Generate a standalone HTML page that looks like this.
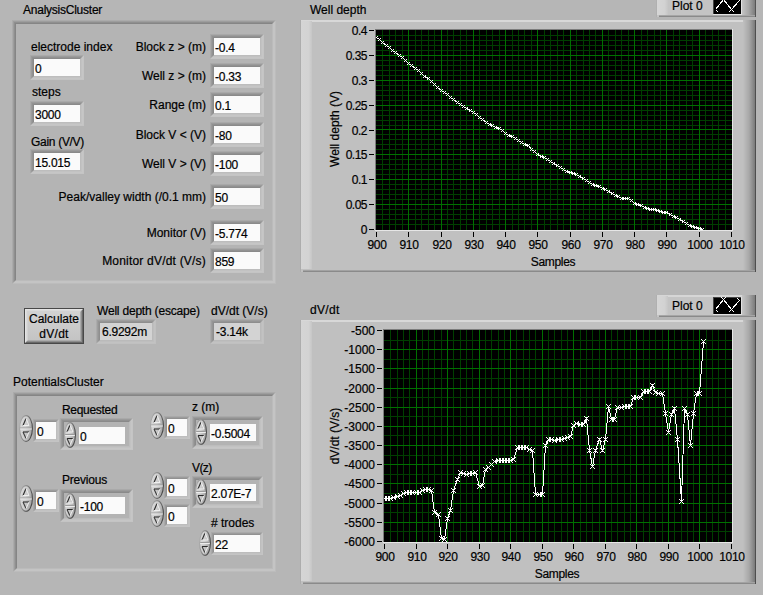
<!DOCTYPE html>
<html><head><meta charset="utf-8"><style>
html,body{margin:0;padding:0;}
body{width:763px;height:595px;overflow:hidden;background:#b6b6b6;position:relative;font-family:'Liberation Sans', sans-serif;}
.t{position:absolute;font-family:'Liberation Sans', sans-serif;font-size:12px;line-height:12px;color:#000;white-space:pre;-webkit-text-stroke:0.2px #000;}
</style></head><body>
<div class="t" style="left:23px;top:4px;font-size:12px;letter-spacing:-0.24px;">AnalysisCluster</div>
<div style="position:absolute;left:12px;top:20px;width:262px;height:262px;border-style:solid;border-width:1px;border-color:#ababab #bcbcbc #bcbcbc #ababab;"><div style="position:absolute;left:0px;top:0px;width:260px;height:260px;border-style:solid;border-width:1px;border-color:#9d9d9d #c4c4c4 #c4c4c4 #9d9d9d;"><div style="position:absolute;left:0px;top:0px;width:258px;height:258px;border-style:solid;border-width:1px;border-color:#8f8f8f #c4c4c4 #c4c4c4 #8f8f8f;"><div style="position:absolute;left:0px;top:0px;width:256px;height:256px;border-style:solid;border-width:1px;border-color:#858585 #bbbbbb #bbbbbb #858585;background:#b4b4b4;"></div></div></div></div>
<div class="t" style="left:31px;top:41px;font-size:12px;">electrode index</div>
<div style="position:absolute;left:30px;top:55px;width:52px;height:23px;border-style:solid;border-width:1px;border-color:#a9a9a9 #c4c4c4 #c4c4c4 #a9a9a9;"><div style="position:absolute;left:0px;top:0px;width:50px;height:21px;border-style:solid;border-width:1px;border-color:#9b9b9b #c6c6c6 #c6c6c6 #9b9b9b;"><div style="position:absolute;left:0px;top:0px;width:48px;height:19px;border-style:solid;border-width:1px;border-color:#919191 #c2c2c2 #c2c2c2 #919191;"><div style="position:absolute;left:0px;top:0px;width:46px;height:17px;border-style:solid;border-width:1px;border-color:#8a8a8a #bdbdbd #bdbdbd #8a8a8a;background:#fafafa;"></div></div></div></div>
<div class="t" style="left:35px;top:63px;font-size:12px;letter-spacing:-0.25px;">0</div>
<div class="t" style="left:32px;top:86px;font-size:12px;">steps</div>
<div style="position:absolute;left:30px;top:101px;width:52px;height:23px;border-style:solid;border-width:1px;border-color:#a9a9a9 #c4c4c4 #c4c4c4 #a9a9a9;"><div style="position:absolute;left:0px;top:0px;width:50px;height:21px;border-style:solid;border-width:1px;border-color:#9b9b9b #c6c6c6 #c6c6c6 #9b9b9b;"><div style="position:absolute;left:0px;top:0px;width:48px;height:19px;border-style:solid;border-width:1px;border-color:#919191 #c2c2c2 #c2c2c2 #919191;"><div style="position:absolute;left:0px;top:0px;width:46px;height:17px;border-style:solid;border-width:1px;border-color:#8a8a8a #bdbdbd #bdbdbd #8a8a8a;background:#fafafa;"></div></div></div></div>
<div class="t" style="left:35px;top:109px;font-size:12px;letter-spacing:-0.25px;">3000</div>
<div class="t" style="left:31px;top:136px;font-size:12px;letter-spacing:-0.3px;">Gain (V/V)</div>
<div style="position:absolute;left:30px;top:149px;width:52px;height:23px;border-style:solid;border-width:1px;border-color:#a9a9a9 #c4c4c4 #c4c4c4 #a9a9a9;"><div style="position:absolute;left:0px;top:0px;width:50px;height:21px;border-style:solid;border-width:1px;border-color:#9b9b9b #c6c6c6 #c6c6c6 #9b9b9b;"><div style="position:absolute;left:0px;top:0px;width:48px;height:19px;border-style:solid;border-width:1px;border-color:#919191 #c2c2c2 #c2c2c2 #919191;"><div style="position:absolute;left:0px;top:0px;width:46px;height:17px;border-style:solid;border-width:1px;border-color:#8a8a8a #bdbdbd #bdbdbd #8a8a8a;background:#fafafa;"></div></div></div></div>
<div class="t" style="left:35px;top:157px;font-size:12px;letter-spacing:-0.25px;">15.015</div>
<div class="t" style="left:-94px;width:300px;text-align:right;top:41px;font-size:12px;">Block z &gt; (m)</div>
<div style="position:absolute;left:210px;top:34px;width:52px;height:23px;border-style:solid;border-width:1px;border-color:#a9a9a9 #c4c4c4 #c4c4c4 #a9a9a9;"><div style="position:absolute;left:0px;top:0px;width:50px;height:21px;border-style:solid;border-width:1px;border-color:#9b9b9b #c6c6c6 #c6c6c6 #9b9b9b;"><div style="position:absolute;left:0px;top:0px;width:48px;height:19px;border-style:solid;border-width:1px;border-color:#919191 #c2c2c2 #c2c2c2 #919191;"><div style="position:absolute;left:0px;top:0px;width:46px;height:17px;border-style:solid;border-width:1px;border-color:#8a8a8a #bdbdbd #bdbdbd #8a8a8a;background:#fafafa;"></div></div></div></div>
<div class="t" style="left:215px;top:42px;font-size:12px;letter-spacing:-0.25px;">-0.4</div>
<div class="t" style="left:-94px;width:300px;text-align:right;top:70px;font-size:12px;">Well z &gt; (m)</div>
<div style="position:absolute;left:210px;top:63px;width:52px;height:23px;border-style:solid;border-width:1px;border-color:#a9a9a9 #c4c4c4 #c4c4c4 #a9a9a9;"><div style="position:absolute;left:0px;top:0px;width:50px;height:21px;border-style:solid;border-width:1px;border-color:#9b9b9b #c6c6c6 #c6c6c6 #9b9b9b;"><div style="position:absolute;left:0px;top:0px;width:48px;height:19px;border-style:solid;border-width:1px;border-color:#919191 #c2c2c2 #c2c2c2 #919191;"><div style="position:absolute;left:0px;top:0px;width:46px;height:17px;border-style:solid;border-width:1px;border-color:#8a8a8a #bdbdbd #bdbdbd #8a8a8a;background:#fafafa;"></div></div></div></div>
<div class="t" style="left:215px;top:71px;font-size:12px;letter-spacing:-0.25px;">-0.33</div>
<div class="t" style="left:-94px;width:300px;text-align:right;top:99px;font-size:12px;">Range (m)</div>
<div style="position:absolute;left:210px;top:92px;width:52px;height:23px;border-style:solid;border-width:1px;border-color:#a9a9a9 #c4c4c4 #c4c4c4 #a9a9a9;"><div style="position:absolute;left:0px;top:0px;width:50px;height:21px;border-style:solid;border-width:1px;border-color:#9b9b9b #c6c6c6 #c6c6c6 #9b9b9b;"><div style="position:absolute;left:0px;top:0px;width:48px;height:19px;border-style:solid;border-width:1px;border-color:#919191 #c2c2c2 #c2c2c2 #919191;"><div style="position:absolute;left:0px;top:0px;width:46px;height:17px;border-style:solid;border-width:1px;border-color:#8a8a8a #bdbdbd #bdbdbd #8a8a8a;background:#fafafa;"></div></div></div></div>
<div class="t" style="left:215px;top:100px;font-size:12px;letter-spacing:-0.25px;">0.1</div>
<div class="t" style="left:-94px;width:300px;text-align:right;top:129px;font-size:12px;">Block V &lt; (V)</div>
<div style="position:absolute;left:210px;top:122px;width:52px;height:23px;border-style:solid;border-width:1px;border-color:#a9a9a9 #c4c4c4 #c4c4c4 #a9a9a9;"><div style="position:absolute;left:0px;top:0px;width:50px;height:21px;border-style:solid;border-width:1px;border-color:#9b9b9b #c6c6c6 #c6c6c6 #9b9b9b;"><div style="position:absolute;left:0px;top:0px;width:48px;height:19px;border-style:solid;border-width:1px;border-color:#919191 #c2c2c2 #c2c2c2 #919191;"><div style="position:absolute;left:0px;top:0px;width:46px;height:17px;border-style:solid;border-width:1px;border-color:#8a8a8a #bdbdbd #bdbdbd #8a8a8a;background:#fafafa;"></div></div></div></div>
<div class="t" style="left:215px;top:130px;font-size:12px;letter-spacing:-0.25px;">-80</div>
<div class="t" style="left:-94px;width:300px;text-align:right;top:158px;font-size:12px;">Well V &gt; (V)</div>
<div style="position:absolute;left:210px;top:151px;width:52px;height:23px;border-style:solid;border-width:1px;border-color:#a9a9a9 #c4c4c4 #c4c4c4 #a9a9a9;"><div style="position:absolute;left:0px;top:0px;width:50px;height:21px;border-style:solid;border-width:1px;border-color:#9b9b9b #c6c6c6 #c6c6c6 #9b9b9b;"><div style="position:absolute;left:0px;top:0px;width:48px;height:19px;border-style:solid;border-width:1px;border-color:#919191 #c2c2c2 #c2c2c2 #919191;"><div style="position:absolute;left:0px;top:0px;width:46px;height:17px;border-style:solid;border-width:1px;border-color:#8a8a8a #bdbdbd #bdbdbd #8a8a8a;background:#fafafa;"></div></div></div></div>
<div class="t" style="left:215px;top:159px;font-size:12px;letter-spacing:-0.25px;">-100</div>
<div class="t" style="left:-94px;width:300px;text-align:right;top:191px;font-size:12px;">Peak/valley width (/0.1 mm)</div>
<div style="position:absolute;left:210px;top:184px;width:52px;height:23px;border-style:solid;border-width:1px;border-color:#a9a9a9 #c4c4c4 #c4c4c4 #a9a9a9;"><div style="position:absolute;left:0px;top:0px;width:50px;height:21px;border-style:solid;border-width:1px;border-color:#9b9b9b #c6c6c6 #c6c6c6 #9b9b9b;"><div style="position:absolute;left:0px;top:0px;width:48px;height:19px;border-style:solid;border-width:1px;border-color:#919191 #c2c2c2 #c2c2c2 #919191;"><div style="position:absolute;left:0px;top:0px;width:46px;height:17px;border-style:solid;border-width:1px;border-color:#8a8a8a #bdbdbd #bdbdbd #8a8a8a;background:#fafafa;"></div></div></div></div>
<div class="t" style="left:215px;top:192px;font-size:12px;letter-spacing:-0.25px;">50</div>
<div class="t" style="left:-94px;width:300px;text-align:right;top:227px;font-size:12px;">Monitor (V)</div>
<div style="position:absolute;left:210px;top:220px;width:52px;height:23px;border-style:solid;border-width:1px;border-color:#a9a9a9 #c4c4c4 #c4c4c4 #a9a9a9;"><div style="position:absolute;left:0px;top:0px;width:50px;height:21px;border-style:solid;border-width:1px;border-color:#9b9b9b #c6c6c6 #c6c6c6 #9b9b9b;"><div style="position:absolute;left:0px;top:0px;width:48px;height:19px;border-style:solid;border-width:1px;border-color:#919191 #c2c2c2 #c2c2c2 #919191;"><div style="position:absolute;left:0px;top:0px;width:46px;height:17px;border-style:solid;border-width:1px;border-color:#8a8a8a #bdbdbd #bdbdbd #8a8a8a;background:#fafafa;"></div></div></div></div>
<div class="t" style="left:215px;top:228px;font-size:12px;letter-spacing:-0.25px;">-5.774</div>
<div class="t" style="left:-94px;width:300px;text-align:right;top:255px;font-size:12px;letter-spacing:0.2px;">Monitor dV/dt (V/s)</div>
<div style="position:absolute;left:210px;top:248px;width:52px;height:23px;border-style:solid;border-width:1px;border-color:#a9a9a9 #c4c4c4 #c4c4c4 #a9a9a9;"><div style="position:absolute;left:0px;top:0px;width:50px;height:21px;border-style:solid;border-width:1px;border-color:#9b9b9b #c6c6c6 #c6c6c6 #9b9b9b;"><div style="position:absolute;left:0px;top:0px;width:48px;height:19px;border-style:solid;border-width:1px;border-color:#919191 #c2c2c2 #c2c2c2 #919191;"><div style="position:absolute;left:0px;top:0px;width:46px;height:17px;border-style:solid;border-width:1px;border-color:#8a8a8a #bdbdbd #bdbdbd #8a8a8a;background:#fafafa;"></div></div></div></div>
<div class="t" style="left:215px;top:256px;font-size:12px;letter-spacing:-0.25px;">859</div>
<div style="position:absolute;left:24px;top:308px;width:58px;height:34px;border:1px solid #484848;"></div>
<div style="position:absolute;left:25px;top:309px;width:56px;height:32px;border-style:solid;border-width:1px;border-color:#e4e4e4 #686868 #686868 #e4e4e4;"><div style="position:absolute;left:0px;top:0px;width:54px;height:30px;border-style:solid;border-width:1px;border-color:#dadada #8c8c8c #8c8c8c #dadada;"><div style="position:absolute;left:0px;top:0px;width:52px;height:28px;border-style:solid;border-width:1px;border-color:#d2d2d2 #ababab #ababab #d2d2d2;background:linear-gradient(#d2d2d2,#c4c4c4);"></div></div></div>
<div class="t" style="left:-96px;width:300px;text-align:center;top:313px;font-size:12px;">Calculate</div>
<div class="t" style="left:-96px;width:300px;text-align:center;top:328px;font-size:12px;letter-spacing:0.3px;">dV/dt</div>
<div class="t" style="left:97px;top:305px;font-size:12px;letter-spacing:-0.2px;">Well depth (escape)</div>
<div style="position:absolute;left:96px;top:319px;width:58px;height:23px;border-style:solid;border-width:1px;border-color:#ababab #c0c0c0 #c0c0c0 #ababab;"><div style="position:absolute;left:0px;top:0px;width:56px;height:21px;border-style:solid;border-width:1px;border-color:#9e9e9e #c2c2c2 #c2c2c2 #9e9e9e;"><div style="position:absolute;left:0px;top:0px;width:54px;height:19px;border-style:solid;border-width:1px;border-color:#959595 #bebebe #bebebe #959595;"><div style="position:absolute;left:0px;top:0px;width:52px;height:17px;border-style:solid;border-width:1px;border-color:#8e8e8e #bababa #bababa #8e8e8e;background:#d3d3d3;"></div></div></div></div>
<div class="t" style="left:102px;top:326px;font-size:12px;letter-spacing:-0.25px;">6.9292m</div>
<div class="t" style="left:211px;top:305px;font-size:12px;">dV/dt (V/s)</div>
<div style="position:absolute;left:210px;top:319px;width:52px;height:23px;border-style:solid;border-width:1px;border-color:#ababab #c0c0c0 #c0c0c0 #ababab;"><div style="position:absolute;left:0px;top:0px;width:50px;height:21px;border-style:solid;border-width:1px;border-color:#9e9e9e #c2c2c2 #c2c2c2 #9e9e9e;"><div style="position:absolute;left:0px;top:0px;width:48px;height:19px;border-style:solid;border-width:1px;border-color:#959595 #bebebe #bebebe #959595;"><div style="position:absolute;left:0px;top:0px;width:46px;height:17px;border-style:solid;border-width:1px;border-color:#8e8e8e #bababa #bababa #8e8e8e;background:#d3d3d3;"></div></div></div></div>
<div class="t" style="left:216px;top:326px;font-size:12px;letter-spacing:-0.25px;">-3.14k</div>
<div class="t" style="left:13px;top:376px;font-size:12px;">PotentialsCluster</div>
<div style="position:absolute;left:13px;top:392px;width:261px;height:178px;border-style:solid;border-width:1px;border-color:#ababab #bcbcbc #bcbcbc #ababab;"><div style="position:absolute;left:0px;top:0px;width:259px;height:176px;border-style:solid;border-width:1px;border-color:#9d9d9d #c4c4c4 #c4c4c4 #9d9d9d;"><div style="position:absolute;left:0px;top:0px;width:257px;height:174px;border-style:solid;border-width:1px;border-color:#8f8f8f #c4c4c4 #c4c4c4 #8f8f8f;"><div style="position:absolute;left:0px;top:0px;width:255px;height:172px;border-style:solid;border-width:1px;border-color:#858585 #bbbbbb #bbbbbb #858585;background:#b4b4b4;"></div></div></div></div>
<div class="t" style="left:62px;top:404px;font-size:12px;letter-spacing:-0.3px;">Requested</div>
<div style="position:absolute;left:33px;top:419px;width:24px;height:21px;border-style:solid;border-width:1px;border-color:#a9a9a9 #c4c4c4 #c4c4c4 #a9a9a9;"><div style="position:absolute;left:0px;top:0px;width:22px;height:19px;border-style:solid;border-width:1px;border-color:#9b9b9b #c2c2c2 #c2c2c2 #9b9b9b;"><div style="position:absolute;left:0px;top:0px;width:20px;height:17px;border-style:solid;border-width:1px;border-color:#919191 #bdbdbd #bdbdbd #919191;background:#fafafa;"></div></div></div>
<svg style="position:absolute;left:19px;top:415px" width="14" height="27" viewBox="0 0 14 27">
<defs><linearGradient id="sf1" x1="0" y1="0" x2="1" y2="0.3"><stop offset="0" stop-color="#dcdcdc"/><stop offset="0.55" stop-color="#cfcfcf"/><stop offset="1" stop-color="#a8a8a8"/></linearGradient>
<linearGradient id="ss1" x1="0" y1="0" x2="1" y2="0.4"><stop offset="0" stop-color="#b4b4b4"/><stop offset="0.5" stop-color="#8a8a8a"/><stop offset="1" stop-color="#4a4a4a"/></linearGradient></defs>
<ellipse cx="7.0" cy="13.5" rx="6.4" ry="12.9" fill="url(#sf1)" stroke="url(#ss1)" stroke-width="1.1"/>
<line x1="1.2" y1="13.0" x2="12.8" y2="13.0" stroke="#9a9a9a" stroke-width="1"/>
<line x1="1.2" y1="14.0" x2="12.8" y2="14.0" stroke="#ececec" stroke-width="1"/>
<path d="M4.0 10.5 L7.0 3.5" stroke="#2a2a2a" stroke-width="1.1" fill="none"/>
<path d="M7.0 3.5 L10.0 10.5 L4.0 10.5" stroke="#f4f4f4" stroke-width="0.9" fill="none"/>
<path d="M4.0 17.0 L10.0 17.0" stroke="#2a2a2a" stroke-width="1.1" fill="none"/>
<path d="M4.0 17.0 L7.0 23.5" stroke="#3a3a3a" stroke-width="1.1" fill="none"/>
<path d="M7.0 23.5 L10.0 17.0" stroke="#f4f4f4" stroke-width="0.9" fill="none"/>
</svg>
<div class="t" style="left:37px;top:426px;font-size:12px;letter-spacing:-0.25px;">0</div>
<div style="position:absolute;left:60px;top:418px;width:71px;height:30px;border-style:solid;border-width:1px;border-color:#a9a9a9 #c4c4c4 #c4c4c4 #a9a9a9;"><div style="position:absolute;left:0px;top:0px;width:69px;height:28px;border-style:solid;border-width:1px;border-color:#9b9b9b #c6c6c6 #c6c6c6 #9b9b9b;"><div style="position:absolute;left:0px;top:0px;width:67px;height:26px;border-style:solid;border-width:1px;border-color:#919191 #c2c2c2 #c2c2c2 #919191;"><div style="position:absolute;left:0px;top:0px;width:65px;height:24px;border-style:solid;border-width:1px;border-color:#8a8a8a #bdbdbd #bdbdbd #8a8a8a;background:#b3b3b3;"></div></div></div></div>
<div style="position:absolute;left:79px;top:427px;width:46px;height:17px;background:#fafafa"></div>
<svg style="position:absolute;left:64px;top:422px" width="12" height="26" viewBox="0 0 12 26">
<defs><linearGradient id="sf2" x1="0" y1="0" x2="1" y2="0.3"><stop offset="0" stop-color="#dcdcdc"/><stop offset="0.55" stop-color="#cfcfcf"/><stop offset="1" stop-color="#a8a8a8"/></linearGradient>
<linearGradient id="ss2" x1="0" y1="0" x2="1" y2="0.4"><stop offset="0" stop-color="#b4b4b4"/><stop offset="0.5" stop-color="#8a8a8a"/><stop offset="1" stop-color="#4a4a4a"/></linearGradient></defs>
<ellipse cx="6.0" cy="13.0" rx="5.4" ry="12.4" fill="url(#sf2)" stroke="url(#ss2)" stroke-width="1.1"/>
<line x1="1.2" y1="12.5" x2="10.8" y2="12.5" stroke="#9a9a9a" stroke-width="1"/>
<line x1="1.2" y1="13.5" x2="10.8" y2="13.5" stroke="#ececec" stroke-width="1"/>
<path d="M3.0 10.0 L6.0 3.0" stroke="#2a2a2a" stroke-width="1.1" fill="none"/>
<path d="M6.0 3.0 L9.0 10.0 L3.0 10.0" stroke="#f4f4f4" stroke-width="0.9" fill="none"/>
<path d="M3.0 16.5 L9.0 16.5" stroke="#2a2a2a" stroke-width="1.1" fill="none"/>
<path d="M3.0 16.5 L6.0 23.0" stroke="#3a3a3a" stroke-width="1.1" fill="none"/>
<path d="M6.0 23.0 L9.0 16.5" stroke="#f4f4f4" stroke-width="0.9" fill="none"/>
</svg>
<div class="t" style="left:80px;top:431px;font-size:12px;letter-spacing:-0.25px;">0</div>
<div class="t" style="left:62px;top:474px;font-size:12px;letter-spacing:-0.2px;">Previous</div>
<div style="position:absolute;left:33px;top:489px;width:24px;height:21px;border-style:solid;border-width:1px;border-color:#a9a9a9 #c4c4c4 #c4c4c4 #a9a9a9;"><div style="position:absolute;left:0px;top:0px;width:22px;height:19px;border-style:solid;border-width:1px;border-color:#9b9b9b #c2c2c2 #c2c2c2 #9b9b9b;"><div style="position:absolute;left:0px;top:0px;width:20px;height:17px;border-style:solid;border-width:1px;border-color:#919191 #bdbdbd #bdbdbd #919191;background:#fafafa;"></div></div></div>
<svg style="position:absolute;left:19px;top:485px" width="14" height="27" viewBox="0 0 14 27">
<defs><linearGradient id="sf3" x1="0" y1="0" x2="1" y2="0.3"><stop offset="0" stop-color="#dcdcdc"/><stop offset="0.55" stop-color="#cfcfcf"/><stop offset="1" stop-color="#a8a8a8"/></linearGradient>
<linearGradient id="ss3" x1="0" y1="0" x2="1" y2="0.4"><stop offset="0" stop-color="#b4b4b4"/><stop offset="0.5" stop-color="#8a8a8a"/><stop offset="1" stop-color="#4a4a4a"/></linearGradient></defs>
<ellipse cx="7.0" cy="13.5" rx="6.4" ry="12.9" fill="url(#sf3)" stroke="url(#ss3)" stroke-width="1.1"/>
<line x1="1.2" y1="13.0" x2="12.8" y2="13.0" stroke="#9a9a9a" stroke-width="1"/>
<line x1="1.2" y1="14.0" x2="12.8" y2="14.0" stroke="#ececec" stroke-width="1"/>
<path d="M4.0 10.5 L7.0 3.5" stroke="#2a2a2a" stroke-width="1.1" fill="none"/>
<path d="M7.0 3.5 L10.0 10.5 L4.0 10.5" stroke="#f4f4f4" stroke-width="0.9" fill="none"/>
<path d="M4.0 17.0 L10.0 17.0" stroke="#2a2a2a" stroke-width="1.1" fill="none"/>
<path d="M4.0 17.0 L7.0 23.5" stroke="#3a3a3a" stroke-width="1.1" fill="none"/>
<path d="M7.0 23.5 L10.0 17.0" stroke="#f4f4f4" stroke-width="0.9" fill="none"/>
</svg>
<div class="t" style="left:37px;top:496px;font-size:12px;letter-spacing:-0.25px;">0</div>
<div style="position:absolute;left:60px;top:489px;width:71px;height:31px;border-style:solid;border-width:1px;border-color:#a9a9a9 #c4c4c4 #c4c4c4 #a9a9a9;"><div style="position:absolute;left:0px;top:0px;width:69px;height:29px;border-style:solid;border-width:1px;border-color:#9b9b9b #c6c6c6 #c6c6c6 #9b9b9b;"><div style="position:absolute;left:0px;top:0px;width:67px;height:27px;border-style:solid;border-width:1px;border-color:#919191 #c2c2c2 #c2c2c2 #919191;"><div style="position:absolute;left:0px;top:0px;width:65px;height:25px;border-style:solid;border-width:1px;border-color:#8a8a8a #bdbdbd #bdbdbd #8a8a8a;background:#b3b3b3;"></div></div></div></div>
<div style="position:absolute;left:79px;top:497px;width:46px;height:17px;background:#fafafa"></div>
<svg style="position:absolute;left:64px;top:493px" width="12" height="26" viewBox="0 0 12 26">
<defs><linearGradient id="sf4" x1="0" y1="0" x2="1" y2="0.3"><stop offset="0" stop-color="#dcdcdc"/><stop offset="0.55" stop-color="#cfcfcf"/><stop offset="1" stop-color="#a8a8a8"/></linearGradient>
<linearGradient id="ss4" x1="0" y1="0" x2="1" y2="0.4"><stop offset="0" stop-color="#b4b4b4"/><stop offset="0.5" stop-color="#8a8a8a"/><stop offset="1" stop-color="#4a4a4a"/></linearGradient></defs>
<ellipse cx="6.0" cy="13.0" rx="5.4" ry="12.4" fill="url(#sf4)" stroke="url(#ss4)" stroke-width="1.1"/>
<line x1="1.2" y1="12.5" x2="10.8" y2="12.5" stroke="#9a9a9a" stroke-width="1"/>
<line x1="1.2" y1="13.5" x2="10.8" y2="13.5" stroke="#ececec" stroke-width="1"/>
<path d="M3.0 10.0 L6.0 3.0" stroke="#2a2a2a" stroke-width="1.1" fill="none"/>
<path d="M6.0 3.0 L9.0 10.0 L3.0 10.0" stroke="#f4f4f4" stroke-width="0.9" fill="none"/>
<path d="M3.0 16.5 L9.0 16.5" stroke="#2a2a2a" stroke-width="1.1" fill="none"/>
<path d="M3.0 16.5 L6.0 23.0" stroke="#3a3a3a" stroke-width="1.1" fill="none"/>
<path d="M6.0 23.0 L9.0 16.5" stroke="#f4f4f4" stroke-width="0.9" fill="none"/>
</svg>
<div class="t" style="left:80px;top:501px;font-size:12px;letter-spacing:-0.25px;">-100</div>
<div class="t" style="left:192px;top:401px;font-size:12px;">z (m)</div>
<div style="position:absolute;left:164px;top:416px;width:24px;height:21px;border-style:solid;border-width:1px;border-color:#a9a9a9 #c4c4c4 #c4c4c4 #a9a9a9;"><div style="position:absolute;left:0px;top:0px;width:22px;height:19px;border-style:solid;border-width:1px;border-color:#9b9b9b #c2c2c2 #c2c2c2 #9b9b9b;"><div style="position:absolute;left:0px;top:0px;width:20px;height:17px;border-style:solid;border-width:1px;border-color:#919191 #bdbdbd #bdbdbd #919191;background:#fafafa;"></div></div></div>
<svg style="position:absolute;left:150px;top:412px" width="14" height="27" viewBox="0 0 14 27">
<defs><linearGradient id="sf5" x1="0" y1="0" x2="1" y2="0.3"><stop offset="0" stop-color="#dcdcdc"/><stop offset="0.55" stop-color="#cfcfcf"/><stop offset="1" stop-color="#a8a8a8"/></linearGradient>
<linearGradient id="ss5" x1="0" y1="0" x2="1" y2="0.4"><stop offset="0" stop-color="#b4b4b4"/><stop offset="0.5" stop-color="#8a8a8a"/><stop offset="1" stop-color="#4a4a4a"/></linearGradient></defs>
<ellipse cx="7.0" cy="13.5" rx="6.4" ry="12.9" fill="url(#sf5)" stroke="url(#ss5)" stroke-width="1.1"/>
<line x1="1.2" y1="13.0" x2="12.8" y2="13.0" stroke="#9a9a9a" stroke-width="1"/>
<line x1="1.2" y1="14.0" x2="12.8" y2="14.0" stroke="#ececec" stroke-width="1"/>
<path d="M4.0 10.5 L7.0 3.5" stroke="#2a2a2a" stroke-width="1.1" fill="none"/>
<path d="M7.0 3.5 L10.0 10.5 L4.0 10.5" stroke="#f4f4f4" stroke-width="0.9" fill="none"/>
<path d="M4.0 17.0 L10.0 17.0" stroke="#2a2a2a" stroke-width="1.1" fill="none"/>
<path d="M4.0 17.0 L7.0 23.5" stroke="#3a3a3a" stroke-width="1.1" fill="none"/>
<path d="M7.0 23.5 L10.0 17.0" stroke="#f4f4f4" stroke-width="0.9" fill="none"/>
</svg>
<div class="t" style="left:168px;top:423px;font-size:12px;letter-spacing:-0.25px;">0</div>
<div style="position:absolute;left:192px;top:416px;width:69px;height:31px;border-style:solid;border-width:1px;border-color:#a9a9a9 #c4c4c4 #c4c4c4 #a9a9a9;"><div style="position:absolute;left:0px;top:0px;width:67px;height:29px;border-style:solid;border-width:1px;border-color:#9b9b9b #c6c6c6 #c6c6c6 #9b9b9b;"><div style="position:absolute;left:0px;top:0px;width:65px;height:27px;border-style:solid;border-width:1px;border-color:#919191 #c2c2c2 #c2c2c2 #919191;"><div style="position:absolute;left:0px;top:0px;width:63px;height:25px;border-style:solid;border-width:1px;border-color:#8a8a8a #bdbdbd #bdbdbd #8a8a8a;background:#b3b3b3;"></div></div></div></div>
<div style="position:absolute;left:210px;top:424px;width:46px;height:17px;background:#fafafa"></div>
<svg style="position:absolute;left:195px;top:419px" width="12" height="26" viewBox="0 0 12 26">
<defs><linearGradient id="sf6" x1="0" y1="0" x2="1" y2="0.3"><stop offset="0" stop-color="#dcdcdc"/><stop offset="0.55" stop-color="#cfcfcf"/><stop offset="1" stop-color="#a8a8a8"/></linearGradient>
<linearGradient id="ss6" x1="0" y1="0" x2="1" y2="0.4"><stop offset="0" stop-color="#b4b4b4"/><stop offset="0.5" stop-color="#8a8a8a"/><stop offset="1" stop-color="#4a4a4a"/></linearGradient></defs>
<ellipse cx="6.0" cy="13.0" rx="5.4" ry="12.4" fill="url(#sf6)" stroke="url(#ss6)" stroke-width="1.1"/>
<line x1="1.2" y1="12.5" x2="10.8" y2="12.5" stroke="#9a9a9a" stroke-width="1"/>
<line x1="1.2" y1="13.5" x2="10.8" y2="13.5" stroke="#ececec" stroke-width="1"/>
<path d="M3.0 10.0 L6.0 3.0" stroke="#2a2a2a" stroke-width="1.1" fill="none"/>
<path d="M6.0 3.0 L9.0 10.0 L3.0 10.0" stroke="#f4f4f4" stroke-width="0.9" fill="none"/>
<path d="M3.0 16.5 L9.0 16.5" stroke="#2a2a2a" stroke-width="1.1" fill="none"/>
<path d="M3.0 16.5 L6.0 23.0" stroke="#3a3a3a" stroke-width="1.1" fill="none"/>
<path d="M6.0 23.0 L9.0 16.5" stroke="#f4f4f4" stroke-width="0.9" fill="none"/>
</svg>
<div class="t" style="left:211px;top:428px;font-size:12px;letter-spacing:-0.25px;">-0.5004</div>
<div class="t" style="left:192px;top:462px;font-size:12px;letter-spacing:-0.6px;">V(z)</div>
<div style="position:absolute;left:164px;top:476px;width:24px;height:21px;border-style:solid;border-width:1px;border-color:#a9a9a9 #c4c4c4 #c4c4c4 #a9a9a9;"><div style="position:absolute;left:0px;top:0px;width:22px;height:19px;border-style:solid;border-width:1px;border-color:#9b9b9b #c2c2c2 #c2c2c2 #9b9b9b;"><div style="position:absolute;left:0px;top:0px;width:20px;height:17px;border-style:solid;border-width:1px;border-color:#919191 #bdbdbd #bdbdbd #919191;background:#fafafa;"></div></div></div>
<svg style="position:absolute;left:150px;top:472px" width="14" height="27" viewBox="0 0 14 27">
<defs><linearGradient id="sf7" x1="0" y1="0" x2="1" y2="0.3"><stop offset="0" stop-color="#dcdcdc"/><stop offset="0.55" stop-color="#cfcfcf"/><stop offset="1" stop-color="#a8a8a8"/></linearGradient>
<linearGradient id="ss7" x1="0" y1="0" x2="1" y2="0.4"><stop offset="0" stop-color="#b4b4b4"/><stop offset="0.5" stop-color="#8a8a8a"/><stop offset="1" stop-color="#4a4a4a"/></linearGradient></defs>
<ellipse cx="7.0" cy="13.5" rx="6.4" ry="12.9" fill="url(#sf7)" stroke="url(#ss7)" stroke-width="1.1"/>
<line x1="1.2" y1="13.0" x2="12.8" y2="13.0" stroke="#9a9a9a" stroke-width="1"/>
<line x1="1.2" y1="14.0" x2="12.8" y2="14.0" stroke="#ececec" stroke-width="1"/>
<path d="M4.0 10.5 L7.0 3.5" stroke="#2a2a2a" stroke-width="1.1" fill="none"/>
<path d="M7.0 3.5 L10.0 10.5 L4.0 10.5" stroke="#f4f4f4" stroke-width="0.9" fill="none"/>
<path d="M4.0 17.0 L10.0 17.0" stroke="#2a2a2a" stroke-width="1.1" fill="none"/>
<path d="M4.0 17.0 L7.0 23.5" stroke="#3a3a3a" stroke-width="1.1" fill="none"/>
<path d="M7.0 23.5 L10.0 17.0" stroke="#f4f4f4" stroke-width="0.9" fill="none"/>
</svg>
<div class="t" style="left:168px;top:483px;font-size:12px;letter-spacing:-0.25px;">0</div>
<div style="position:absolute;left:164px;top:504px;width:24px;height:21px;border-style:solid;border-width:1px;border-color:#a9a9a9 #c4c4c4 #c4c4c4 #a9a9a9;"><div style="position:absolute;left:0px;top:0px;width:22px;height:19px;border-style:solid;border-width:1px;border-color:#9b9b9b #c2c2c2 #c2c2c2 #9b9b9b;"><div style="position:absolute;left:0px;top:0px;width:20px;height:17px;border-style:solid;border-width:1px;border-color:#919191 #bdbdbd #bdbdbd #919191;background:#fafafa;"></div></div></div>
<svg style="position:absolute;left:150px;top:500px" width="14" height="27" viewBox="0 0 14 27">
<defs><linearGradient id="sf8" x1="0" y1="0" x2="1" y2="0.3"><stop offset="0" stop-color="#dcdcdc"/><stop offset="0.55" stop-color="#cfcfcf"/><stop offset="1" stop-color="#a8a8a8"/></linearGradient>
<linearGradient id="ss8" x1="0" y1="0" x2="1" y2="0.4"><stop offset="0" stop-color="#b4b4b4"/><stop offset="0.5" stop-color="#8a8a8a"/><stop offset="1" stop-color="#4a4a4a"/></linearGradient></defs>
<ellipse cx="7.0" cy="13.5" rx="6.4" ry="12.9" fill="url(#sf8)" stroke="url(#ss8)" stroke-width="1.1"/>
<line x1="1.2" y1="13.0" x2="12.8" y2="13.0" stroke="#9a9a9a" stroke-width="1"/>
<line x1="1.2" y1="14.0" x2="12.8" y2="14.0" stroke="#ececec" stroke-width="1"/>
<path d="M4.0 10.5 L7.0 3.5" stroke="#2a2a2a" stroke-width="1.1" fill="none"/>
<path d="M7.0 3.5 L10.0 10.5 L4.0 10.5" stroke="#f4f4f4" stroke-width="0.9" fill="none"/>
<path d="M4.0 17.0 L10.0 17.0" stroke="#2a2a2a" stroke-width="1.1" fill="none"/>
<path d="M4.0 17.0 L7.0 23.5" stroke="#3a3a3a" stroke-width="1.1" fill="none"/>
<path d="M7.0 23.5 L10.0 17.0" stroke="#f4f4f4" stroke-width="0.9" fill="none"/>
</svg>
<div class="t" style="left:168px;top:511px;font-size:12px;letter-spacing:-0.25px;">0</div>
<div style="position:absolute;left:192px;top:476px;width:69px;height:30px;border-style:solid;border-width:1px;border-color:#a9a9a9 #c4c4c4 #c4c4c4 #a9a9a9;"><div style="position:absolute;left:0px;top:0px;width:67px;height:28px;border-style:solid;border-width:1px;border-color:#9b9b9b #c6c6c6 #c6c6c6 #9b9b9b;"><div style="position:absolute;left:0px;top:0px;width:65px;height:26px;border-style:solid;border-width:1px;border-color:#919191 #c2c2c2 #c2c2c2 #919191;"><div style="position:absolute;left:0px;top:0px;width:63px;height:24px;border-style:solid;border-width:1px;border-color:#8a8a8a #bdbdbd #bdbdbd #8a8a8a;background:#b3b3b3;"></div></div></div></div>
<div style="position:absolute;left:210px;top:484px;width:46px;height:17px;background:#fafafa"></div>
<svg style="position:absolute;left:195px;top:479px" width="12" height="26" viewBox="0 0 12 26">
<defs><linearGradient id="sf9" x1="0" y1="0" x2="1" y2="0.3"><stop offset="0" stop-color="#dcdcdc"/><stop offset="0.55" stop-color="#cfcfcf"/><stop offset="1" stop-color="#a8a8a8"/></linearGradient>
<linearGradient id="ss9" x1="0" y1="0" x2="1" y2="0.4"><stop offset="0" stop-color="#b4b4b4"/><stop offset="0.5" stop-color="#8a8a8a"/><stop offset="1" stop-color="#4a4a4a"/></linearGradient></defs>
<ellipse cx="6.0" cy="13.0" rx="5.4" ry="12.4" fill="url(#sf9)" stroke="url(#ss9)" stroke-width="1.1"/>
<line x1="1.2" y1="12.5" x2="10.8" y2="12.5" stroke="#9a9a9a" stroke-width="1"/>
<line x1="1.2" y1="13.5" x2="10.8" y2="13.5" stroke="#ececec" stroke-width="1"/>
<path d="M3.0 10.0 L6.0 3.0" stroke="#2a2a2a" stroke-width="1.1" fill="none"/>
<path d="M6.0 3.0 L9.0 10.0 L3.0 10.0" stroke="#f4f4f4" stroke-width="0.9" fill="none"/>
<path d="M3.0 16.5 L9.0 16.5" stroke="#2a2a2a" stroke-width="1.1" fill="none"/>
<path d="M3.0 16.5 L6.0 23.0" stroke="#3a3a3a" stroke-width="1.1" fill="none"/>
<path d="M6.0 23.0 L9.0 16.5" stroke="#f4f4f4" stroke-width="0.9" fill="none"/>
</svg>
<div class="t" style="left:211px;top:488px;font-size:12px;letter-spacing:-0.25px;">2.07E-7</div>
<div class="t" style="left:211px;top:517px;font-size:12px;"># trodes</div>
<div style="position:absolute;left:211px;top:532px;width:50px;height:21px;border-style:solid;border-width:1px;border-color:#a9a9a9 #c4c4c4 #c4c4c4 #a9a9a9;"><div style="position:absolute;left:0px;top:0px;width:48px;height:19px;border-style:solid;border-width:1px;border-color:#9b9b9b #c2c2c2 #c2c2c2 #9b9b9b;"><div style="position:absolute;left:0px;top:0px;width:46px;height:17px;border-style:solid;border-width:1px;border-color:#919191 #bdbdbd #bdbdbd #919191;background:#fafafa;"></div></div></div>
<svg style="position:absolute;left:199px;top:530px" width="12" height="26" viewBox="0 0 12 26">
<defs><linearGradient id="sf10" x1="0" y1="0" x2="1" y2="0.3"><stop offset="0" stop-color="#dcdcdc"/><stop offset="0.55" stop-color="#cfcfcf"/><stop offset="1" stop-color="#a8a8a8"/></linearGradient>
<linearGradient id="ss10" x1="0" y1="0" x2="1" y2="0.4"><stop offset="0" stop-color="#b4b4b4"/><stop offset="0.5" stop-color="#8a8a8a"/><stop offset="1" stop-color="#4a4a4a"/></linearGradient></defs>
<ellipse cx="6.0" cy="13.0" rx="5.4" ry="12.4" fill="url(#sf10)" stroke="url(#ss10)" stroke-width="1.1"/>
<line x1="1.2" y1="12.5" x2="10.8" y2="12.5" stroke="#9a9a9a" stroke-width="1"/>
<line x1="1.2" y1="13.5" x2="10.8" y2="13.5" stroke="#ececec" stroke-width="1"/>
<path d="M3.0 10.0 L6.0 3.0" stroke="#2a2a2a" stroke-width="1.1" fill="none"/>
<path d="M6.0 3.0 L9.0 10.0 L3.0 10.0" stroke="#f4f4f4" stroke-width="0.9" fill="none"/>
<path d="M3.0 16.5 L9.0 16.5" stroke="#2a2a2a" stroke-width="1.1" fill="none"/>
<path d="M3.0 16.5 L6.0 23.0" stroke="#3a3a3a" stroke-width="1.1" fill="none"/>
<path d="M6.0 23.0 L9.0 16.5" stroke="#f4f4f4" stroke-width="0.9" fill="none"/>
</svg>
<div class="t" style="left:215px;top:539px;font-size:12px;letter-spacing:-0.25px;">22</div>
<div class="t" style="left:310px;top:4px;font-size:12px;">Well depth</div>
<div style="position:absolute;left:300px;top:20px;width:456px;height:252px;background:#c0c0c0;overflow:hidden"><div style="position:absolute;left:0;top:0;width:1px;height:252px;background:#adadad"></div><div style="position:absolute;left:1px;top:0;width:442px;height:2px;background:#d8d8d8"></div><div style="position:absolute;left:1px;top:1px;width:11px;height:248px;background:linear-gradient(to right,#d5d5d5 0,#d3d3d3 70%,#c6c6c6 100%)"></div><div style="position:absolute;left:443px;top:0;width:12px;height:252px;background:linear-gradient(to right,#c0c0c0 0,#a8a8a8 50%,#7a7a7a 100%)"></div><div style="position:absolute;left:455px;top:0;width:1px;height:252px;background:#4e4e4e"></div><div style="position:absolute;left:3px;top:250px;width:452px;height:1px;background:#a2a2a2"></div><div style="position:absolute;left:3px;top:251px;width:452px;height:1px;background:#8a8a8a"></div></div>
<div style="position:absolute;left:656px;top:-5px;width:100px;height:22px;background:#c4c4c4;overflow:hidden"><div style="position:absolute;left:0;top:0;width:1px;height:22px;background:#b0b0b0"></div><div style="position:absolute;left:1px;top:0;width:86px;height:2px;background:#d6d6d6"></div><div style="position:absolute;left:1px;top:1px;width:11px;height:19px;background:linear-gradient(to right,#d6d6d6,#d2d2d2 70%,#c6c6c6)"></div><div style="position:absolute;left:86px;top:0;width:13px;height:22px;background:linear-gradient(to right,#c4c4c4,#a8a8a8 50%,#7c7c7c)"></div><div style="position:absolute;left:99px;top:0;width:1px;height:22px;background:#555"></div><div style="position:absolute;left:3px;top:20px;width:96px;height:1px;background:#a6a6a6"></div><div style="position:absolute;left:3px;top:21px;width:96px;height:1px;background:#8a8a8a"></div></div>
<div class="t" style="left:672px;top:0px;font-size:12px;">Plot 0</div>
<svg style="position:absolute;left:713px;top:-3px" width="29" height="18" viewBox="0 0 29 18">
<rect x="0" y="0" width="29" height="18" fill="#000"/>
<path d="M0.5 18V0.5H29" stroke="#444" fill="none" shape-rendering="crispEdges"/>
<path d="M28.5 0V17.5H0" stroke="#e2e2e2" fill="none" shape-rendering="crispEdges"/>
<polyline points="2.5,12.5 10.5,2.5 18.5,12.5 26.5,3.5" fill="none" stroke="#fff" stroke-width="1" shape-rendering="crispEdges"/>
<path fill="#fff" shape-rendering="crispEdges" d="M8 0h1v1h-1zM8 4h1v1h-1zM9 1h1v1h-1zM9 3h1v1h-1zM10 2h1v1h-1zM11 3h1v1h-1zM11 1h1v1h-1zM12 4h1v1h-1zM12 0h1v1h-1zM16 10h1v1h-1zM16 14h1v1h-1zM17 11h1v1h-1zM17 13h1v1h-1zM18 12h1v1h-1zM19 13h1v1h-1zM19 11h1v1h-1zM20 14h1v1h-1zM20 10h1v1h-1zM3 13h1v1h-1zM4 14h1v1h-1zM25 2h1v1h-1zM24 1h1v1h-1z"/>
</svg>
<svg style="position:absolute;left:375px;top:29px" width="358" height="202" viewBox="0 0 358 202"><rect x="0" y="0" width="358" height="202" fill="#000"/><path d="M7.5 1V201M14.5 1V201M20.5 1V201M27.5 1V201M40.5 1V201M46.5 1V201M53.5 1V201M59.5 1V201M72.5 1V201M78.5 1V201M85.5 1V201M91.5 1V201M104.5 1V201M111.5 1V201M117.5 1V201M124.5 1V201M137.5 1V201M143.5 1V201M149.5 1V201M156.5 1V201M169.5 1V201M175.5 1V201M182.5 1V201M188.5 1V201M201.5 1V201M208.5 1V201M214.5 1V201M220.5 1V201M233.5 1V201M240.5 1V201M246.5 1V201M253.5 1V201M266.5 1V201M272.5 1V201M279.5 1V201M285.5 1V201M298.5 1V201M304.5 1V201M311.5 1V201M317.5 1V201M330.5 1V201M337.5 1V201M343.5 1V201M350.5 1V201M1 6.5H357M1 11.5H357M1 16.5H357M1 21.5H357M1 31.5H357M1 36.5H357M1 41.5H357M1 46.5H357M1 56.5H357M1 61.5H357M1 66.5H357M1 71.5H357M1 81.5H357M1 86.5H357M1 91.5H357M1 96.5H357M1 105.5H357M1 110.5H357M1 115.5H357M1 120.5H357M1 130.5H357M1 135.5H357M1 140.5H357M1 145.5H357M1 155.5H357M1 160.5H357M1 165.5H357M1 170.5H357M1 180.5H357M1 185.5H357M1 190.5H357M1 195.5H357" stroke="#003f00" stroke-width="1" shape-rendering="crispEdges"/><path d="M33.5 1V201M66.5 1V201M98.5 1V201M130.5 1V201M162.5 1V201M195.5 1V201M227.5 1V201M259.5 1V201M291.5 1V201M324.5 1V201M1 26.5H357M1 51.5H357M1 76.5H357M1 100.5H357M1 125.5H357M1 150.5H357M1 175.5H357" stroke="#007000" stroke-width="1" shape-rendering="crispEdges"/><path d="M0.5 202V0.5H358" stroke="#7c7c7c" fill="none" shape-rendering="crispEdges"/><path d="M357.5 0V201.5H0" stroke="#e6e6e6" fill="none" shape-rendering="crispEdges"/><clipPath id="c37529"><rect x="1" y="1" width="356" height="200"/></clipPath><g clip-path="url(#c37529)"><polyline points="1.5,8.5 4.5,10.5 7.5,13.5 11.5,16.5 14.5,18.5 17.5,21.5 20.5,23.5 24.5,26.5 27.5,28.5 30.5,31.5 33.5,34.5 36.5,36.5 40.5,39.5 43.5,41.5 46.5,44.5 49.5,47.5 53.5,49.5 56.5,52.5 59.5,55.5 62.5,58.5 66.5,61.5 69.5,63.5 72.5,65.5 75.5,68.5 78.5,70.5 82.5,73.5 85.5,75.5 88.5,77.5 91.5,79.5 95.5,81.5 98.5,83.5 101.5,85.5 104.5,88.5 107.5,90.5 111.5,93.5 114.5,95.5 117.5,96.5 120.5,98.5 124.5,99.5 127.5,101.5 130.5,104.5 133.5,106.5 137.5,107.5 140.5,109.5 143.5,111.5 146.5,113.5 149.5,115.5 153.5,116.5 156.5,120.5 159.5,122.5 162.5,125.5 166.5,127.5 169.5,128.5 172.5,130.5 175.5,132.5 178.5,134.5 182.5,136.5 185.5,138.5 188.5,140.5 191.5,142.5 195.5,143.5 198.5,144.5 201.5,145.5 204.5,147.5 208.5,149.5 211.5,151.5 214.5,153.5 217.5,155.5 220.5,156.5 224.5,157.5 227.5,159.5 230.5,160.5 233.5,162.5 237.5,164.5 240.5,166.5 243.5,167.5 246.5,169.5 249.5,169.5 253.5,169.5 256.5,171.5 259.5,174.5 262.5,175.5 266.5,176.5 269.5,178.5 272.5,179.5 275.5,180.5 279.5,180.5 282.5,181.5 285.5,182.5 288.5,183.5 291.5,183.5 295.5,185.5 298.5,187.5 301.5,188.5 304.5,190.5 308.5,192.5 311.5,194.5 314.5,196.5 317.5,197.5 320.5,198.5 324.5,199.5 327.5,200.5" fill="none" stroke="#fff" stroke-width="1" shape-rendering="crispEdges"/><path fill="#fff" shape-rendering="crispEdges" d="M0 7h1v1h-1zM0 9h1v1h-1zM1 8h1v1h-1zM2 9h1v1h-1zM2 7h1v1h-1zM3 9h1v1h-1zM3 11h1v1h-1zM4 10h1v1h-1zM5 11h1v1h-1zM5 9h1v1h-1zM6 12h1v1h-1zM6 14h1v1h-1zM7 13h1v1h-1zM8 14h1v1h-1zM8 12h1v1h-1zM10 15h1v1h-1zM10 17h1v1h-1zM11 16h1v1h-1zM12 17h1v1h-1zM12 15h1v1h-1zM13 17h1v1h-1zM13 19h1v1h-1zM14 18h1v1h-1zM15 19h1v1h-1zM15 17h1v1h-1zM16 20h1v1h-1zM16 22h1v1h-1zM17 21h1v1h-1zM18 22h1v1h-1zM18 20h1v1h-1zM19 22h1v1h-1zM19 24h1v1h-1zM20 23h1v1h-1zM21 24h1v1h-1zM21 22h1v1h-1zM23 25h1v1h-1zM23 27h1v1h-1zM24 26h1v1h-1zM25 27h1v1h-1zM25 25h1v1h-1zM26 27h1v1h-1zM26 29h1v1h-1zM27 28h1v1h-1zM28 29h1v1h-1zM28 27h1v1h-1zM29 30h1v1h-1zM29 32h1v1h-1zM30 31h1v1h-1zM31 32h1v1h-1zM31 30h1v1h-1zM32 33h1v1h-1zM32 35h1v1h-1zM33 34h1v1h-1zM34 35h1v1h-1zM34 33h1v1h-1zM35 35h1v1h-1zM35 37h1v1h-1zM36 36h1v1h-1zM37 37h1v1h-1zM37 35h1v1h-1zM39 38h1v1h-1zM39 40h1v1h-1zM40 39h1v1h-1zM41 40h1v1h-1zM41 38h1v1h-1zM42 40h1v1h-1zM42 42h1v1h-1zM43 41h1v1h-1zM44 42h1v1h-1zM44 40h1v1h-1zM45 43h1v1h-1zM45 45h1v1h-1zM46 44h1v1h-1zM47 45h1v1h-1zM47 43h1v1h-1zM48 46h1v1h-1zM48 48h1v1h-1zM49 47h1v1h-1zM50 48h1v1h-1zM50 46h1v1h-1zM52 48h1v1h-1zM52 50h1v1h-1zM53 49h1v1h-1zM54 50h1v1h-1zM54 48h1v1h-1zM55 51h1v1h-1zM55 53h1v1h-1zM56 52h1v1h-1zM57 53h1v1h-1zM57 51h1v1h-1zM58 54h1v1h-1zM58 56h1v1h-1zM59 55h1v1h-1zM60 56h1v1h-1zM60 54h1v1h-1zM61 57h1v1h-1zM61 59h1v1h-1zM62 58h1v1h-1zM63 59h1v1h-1zM63 57h1v1h-1zM65 60h1v1h-1zM65 62h1v1h-1zM66 61h1v1h-1zM67 62h1v1h-1zM67 60h1v1h-1zM68 62h1v1h-1zM68 64h1v1h-1zM69 63h1v1h-1zM70 64h1v1h-1zM70 62h1v1h-1zM71 64h1v1h-1zM71 66h1v1h-1zM72 65h1v1h-1zM73 66h1v1h-1zM73 64h1v1h-1zM74 67h1v1h-1zM74 69h1v1h-1zM75 68h1v1h-1zM76 69h1v1h-1zM76 67h1v1h-1zM77 69h1v1h-1zM77 71h1v1h-1zM78 70h1v1h-1zM79 71h1v1h-1zM79 69h1v1h-1zM81 72h1v1h-1zM81 74h1v1h-1zM82 73h1v1h-1zM83 74h1v1h-1zM83 72h1v1h-1zM84 74h1v1h-1zM84 76h1v1h-1zM85 75h1v1h-1zM86 76h1v1h-1zM86 74h1v1h-1zM87 76h1v1h-1zM87 78h1v1h-1zM88 77h1v1h-1zM89 78h1v1h-1zM89 76h1v1h-1zM90 78h1v1h-1zM90 80h1v1h-1zM91 79h1v1h-1zM92 80h1v1h-1zM92 78h1v1h-1zM94 80h1v1h-1zM94 82h1v1h-1zM95 81h1v1h-1zM96 82h1v1h-1zM96 80h1v1h-1zM97 82h1v1h-1zM97 84h1v1h-1zM98 83h1v1h-1zM99 84h1v1h-1zM99 82h1v1h-1zM100 84h1v1h-1zM100 86h1v1h-1zM101 85h1v1h-1zM102 86h1v1h-1zM102 84h1v1h-1zM103 87h1v1h-1zM103 89h1v1h-1zM104 88h1v1h-1zM105 89h1v1h-1zM105 87h1v1h-1zM106 89h1v1h-1zM106 91h1v1h-1zM107 90h1v1h-1zM108 91h1v1h-1zM108 89h1v1h-1zM110 92h1v1h-1zM110 94h1v1h-1zM111 93h1v1h-1zM112 94h1v1h-1zM112 92h1v1h-1zM113 94h1v1h-1zM113 96h1v1h-1zM114 95h1v1h-1zM115 96h1v1h-1zM115 94h1v1h-1zM116 95h1v1h-1zM116 97h1v1h-1zM117 96h1v1h-1zM118 97h1v1h-1zM118 95h1v1h-1zM119 97h1v1h-1zM119 99h1v1h-1zM120 98h1v1h-1zM121 99h1v1h-1zM121 97h1v1h-1zM123 98h1v1h-1zM123 100h1v1h-1zM124 99h1v1h-1zM125 100h1v1h-1zM125 98h1v1h-1zM126 100h1v1h-1zM126 102h1v1h-1zM127 101h1v1h-1zM128 102h1v1h-1zM128 100h1v1h-1zM129 103h1v1h-1zM129 105h1v1h-1zM130 104h1v1h-1zM131 105h1v1h-1zM131 103h1v1h-1zM132 105h1v1h-1zM132 107h1v1h-1zM133 106h1v1h-1zM134 107h1v1h-1zM134 105h1v1h-1zM136 106h1v1h-1zM136 108h1v1h-1zM137 107h1v1h-1zM138 108h1v1h-1zM138 106h1v1h-1zM139 108h1v1h-1zM139 110h1v1h-1zM140 109h1v1h-1zM141 110h1v1h-1zM141 108h1v1h-1zM142 110h1v1h-1zM142 112h1v1h-1zM143 111h1v1h-1zM144 112h1v1h-1zM144 110h1v1h-1zM145 112h1v1h-1zM145 114h1v1h-1zM146 113h1v1h-1zM147 114h1v1h-1zM147 112h1v1h-1zM148 114h1v1h-1zM148 116h1v1h-1zM149 115h1v1h-1zM150 116h1v1h-1zM150 114h1v1h-1zM152 115h1v1h-1zM152 117h1v1h-1zM153 116h1v1h-1zM154 117h1v1h-1zM154 115h1v1h-1zM155 119h1v1h-1zM155 121h1v1h-1zM156 120h1v1h-1zM157 121h1v1h-1zM157 119h1v1h-1zM158 121h1v1h-1zM158 123h1v1h-1zM159 122h1v1h-1zM160 123h1v1h-1zM160 121h1v1h-1zM161 124h1v1h-1zM161 126h1v1h-1zM162 125h1v1h-1zM163 126h1v1h-1zM163 124h1v1h-1zM165 126h1v1h-1zM165 128h1v1h-1zM166 127h1v1h-1zM167 128h1v1h-1zM167 126h1v1h-1zM168 127h1v1h-1zM168 129h1v1h-1zM169 128h1v1h-1zM170 129h1v1h-1zM170 127h1v1h-1zM171 129h1v1h-1zM171 131h1v1h-1zM172 130h1v1h-1zM173 131h1v1h-1zM173 129h1v1h-1zM174 131h1v1h-1zM174 133h1v1h-1zM175 132h1v1h-1zM176 133h1v1h-1zM176 131h1v1h-1zM177 133h1v1h-1zM177 135h1v1h-1zM178 134h1v1h-1zM179 135h1v1h-1zM179 133h1v1h-1zM181 135h1v1h-1zM181 137h1v1h-1zM182 136h1v1h-1zM183 137h1v1h-1zM183 135h1v1h-1zM184 137h1v1h-1zM184 139h1v1h-1zM185 138h1v1h-1zM186 139h1v1h-1zM186 137h1v1h-1zM187 139h1v1h-1zM187 141h1v1h-1zM188 140h1v1h-1zM189 141h1v1h-1zM189 139h1v1h-1zM190 141h1v1h-1zM190 143h1v1h-1zM191 142h1v1h-1zM192 143h1v1h-1zM192 141h1v1h-1zM194 142h1v1h-1zM194 144h1v1h-1zM195 143h1v1h-1zM196 144h1v1h-1zM196 142h1v1h-1zM197 143h1v1h-1zM197 145h1v1h-1zM198 144h1v1h-1zM199 145h1v1h-1zM199 143h1v1h-1zM200 144h1v1h-1zM200 146h1v1h-1zM201 145h1v1h-1zM202 146h1v1h-1zM202 144h1v1h-1zM203 146h1v1h-1zM203 148h1v1h-1zM204 147h1v1h-1zM205 148h1v1h-1zM205 146h1v1h-1zM207 148h1v1h-1zM207 150h1v1h-1zM208 149h1v1h-1zM209 150h1v1h-1zM209 148h1v1h-1zM210 150h1v1h-1zM210 152h1v1h-1zM211 151h1v1h-1zM212 152h1v1h-1zM212 150h1v1h-1zM213 152h1v1h-1zM213 154h1v1h-1zM214 153h1v1h-1zM215 154h1v1h-1zM215 152h1v1h-1zM216 154h1v1h-1zM216 156h1v1h-1zM217 155h1v1h-1zM218 156h1v1h-1zM218 154h1v1h-1zM219 155h1v1h-1zM219 157h1v1h-1zM220 156h1v1h-1zM221 157h1v1h-1zM221 155h1v1h-1zM223 156h1v1h-1zM223 158h1v1h-1zM224 157h1v1h-1zM225 158h1v1h-1zM225 156h1v1h-1zM226 158h1v1h-1zM226 160h1v1h-1zM227 159h1v1h-1zM228 160h1v1h-1zM228 158h1v1h-1zM229 159h1v1h-1zM229 161h1v1h-1zM230 160h1v1h-1zM231 161h1v1h-1zM231 159h1v1h-1zM232 161h1v1h-1zM232 163h1v1h-1zM233 162h1v1h-1zM234 163h1v1h-1zM234 161h1v1h-1zM236 163h1v1h-1zM236 165h1v1h-1zM237 164h1v1h-1zM238 165h1v1h-1zM238 163h1v1h-1zM239 165h1v1h-1zM239 167h1v1h-1zM240 166h1v1h-1zM241 167h1v1h-1zM241 165h1v1h-1zM242 166h1v1h-1zM242 168h1v1h-1zM243 167h1v1h-1zM244 168h1v1h-1zM244 166h1v1h-1zM245 168h1v1h-1zM245 170h1v1h-1zM246 169h1v1h-1zM247 170h1v1h-1zM247 168h1v1h-1zM248 168h1v1h-1zM248 170h1v1h-1zM249 169h1v1h-1zM250 170h1v1h-1zM250 168h1v1h-1zM252 168h1v1h-1zM252 170h1v1h-1zM253 169h1v1h-1zM254 170h1v1h-1zM254 168h1v1h-1zM255 170h1v1h-1zM255 172h1v1h-1zM256 171h1v1h-1zM257 172h1v1h-1zM257 170h1v1h-1zM258 173h1v1h-1zM258 175h1v1h-1zM259 174h1v1h-1zM260 175h1v1h-1zM260 173h1v1h-1zM261 174h1v1h-1zM261 176h1v1h-1zM262 175h1v1h-1zM263 176h1v1h-1zM263 174h1v1h-1zM265 175h1v1h-1zM265 177h1v1h-1zM266 176h1v1h-1zM267 177h1v1h-1zM267 175h1v1h-1zM268 177h1v1h-1zM268 179h1v1h-1zM269 178h1v1h-1zM270 179h1v1h-1zM270 177h1v1h-1zM271 178h1v1h-1zM271 180h1v1h-1zM272 179h1v1h-1zM273 180h1v1h-1zM273 178h1v1h-1zM274 179h1v1h-1zM274 181h1v1h-1zM275 180h1v1h-1zM276 181h1v1h-1zM276 179h1v1h-1zM278 179h1v1h-1zM278 181h1v1h-1zM279 180h1v1h-1zM280 181h1v1h-1zM280 179h1v1h-1zM281 180h1v1h-1zM281 182h1v1h-1zM282 181h1v1h-1zM283 182h1v1h-1zM283 180h1v1h-1zM284 181h1v1h-1zM284 183h1v1h-1zM285 182h1v1h-1zM286 183h1v1h-1zM286 181h1v1h-1zM287 182h1v1h-1zM287 184h1v1h-1zM288 183h1v1h-1zM289 184h1v1h-1zM289 182h1v1h-1zM290 182h1v1h-1zM290 184h1v1h-1zM291 183h1v1h-1zM292 184h1v1h-1zM292 182h1v1h-1zM294 184h1v1h-1zM294 186h1v1h-1zM295 185h1v1h-1zM296 186h1v1h-1zM296 184h1v1h-1zM297 186h1v1h-1zM297 188h1v1h-1zM298 187h1v1h-1zM299 188h1v1h-1zM299 186h1v1h-1zM300 187h1v1h-1zM300 189h1v1h-1zM301 188h1v1h-1zM302 189h1v1h-1zM302 187h1v1h-1zM303 189h1v1h-1zM303 191h1v1h-1zM304 190h1v1h-1zM305 191h1v1h-1zM305 189h1v1h-1zM307 191h1v1h-1zM307 193h1v1h-1zM308 192h1v1h-1zM309 193h1v1h-1zM309 191h1v1h-1zM310 193h1v1h-1zM310 195h1v1h-1zM311 194h1v1h-1zM312 195h1v1h-1zM312 193h1v1h-1zM313 195h1v1h-1zM313 197h1v1h-1zM314 196h1v1h-1zM315 197h1v1h-1zM315 195h1v1h-1zM316 196h1v1h-1zM316 198h1v1h-1zM317 197h1v1h-1zM318 198h1v1h-1zM318 196h1v1h-1zM319 197h1v1h-1zM319 199h1v1h-1zM320 198h1v1h-1zM321 199h1v1h-1zM321 197h1v1h-1zM323 198h1v1h-1zM323 200h1v1h-1zM324 199h1v1h-1zM325 200h1v1h-1zM325 198h1v1h-1zM326 199h1v1h-1zM326 201h1v1h-1zM327 200h1v1h-1zM328 201h1v1h-1zM328 199h1v1h-1z"/></g></svg>
<div class="t" style="left:67px;width:300px;text-align:right;top:25px;font-size:12px;letter-spacing:-0.5px;">0.4</div>
<div style="position:absolute;left:369px;top:30px;width:5px;height:1px;background:#000"></div>
<div class="t" style="left:67px;width:300px;text-align:right;top:50px;font-size:12px;letter-spacing:-0.5px;">0.35</div>
<div style="position:absolute;left:369px;top:55px;width:5px;height:1px;background:#000"></div>
<div class="t" style="left:67px;width:300px;text-align:right;top:75px;font-size:12px;letter-spacing:-0.5px;">0.3</div>
<div style="position:absolute;left:369px;top:80px;width:5px;height:1px;background:#000"></div>
<div class="t" style="left:67px;width:300px;text-align:right;top:100px;font-size:12px;letter-spacing:-0.5px;">0.25</div>
<div style="position:absolute;left:369px;top:105px;width:5px;height:1px;background:#000"></div>
<div class="t" style="left:67px;width:300px;text-align:right;top:125px;font-size:12px;letter-spacing:-0.5px;">0.2</div>
<div style="position:absolute;left:369px;top:130px;width:5px;height:1px;background:#000"></div>
<div class="t" style="left:67px;width:300px;text-align:right;top:149px;font-size:12px;letter-spacing:-0.5px;">0.15</div>
<div style="position:absolute;left:369px;top:154px;width:5px;height:1px;background:#000"></div>
<div class="t" style="left:67px;width:300px;text-align:right;top:174px;font-size:12px;letter-spacing:-0.5px;">0.1</div>
<div style="position:absolute;left:369px;top:179px;width:5px;height:1px;background:#000"></div>
<div class="t" style="left:67px;width:300px;text-align:right;top:199px;font-size:12px;letter-spacing:-0.5px;">0.05</div>
<div style="position:absolute;left:369px;top:204px;width:5px;height:1px;background:#000"></div>
<div class="t" style="left:67px;width:300px;text-align:right;top:224px;font-size:12px;letter-spacing:-0.5px;">0</div>
<div style="position:absolute;left:369px;top:229px;width:5px;height:1px;background:#000"></div>
<div style="position:absolute;left:376px;top:232px;width:1px;height:5px;background:#000"></div>
<div class="t" style="left:227px;width:300px;text-align:center;top:239px;font-size:12px;letter-spacing:-0.3px;">900</div>
<div style="position:absolute;left:408px;top:232px;width:1px;height:5px;background:#000"></div>
<div class="t" style="left:259px;width:300px;text-align:center;top:239px;font-size:12px;letter-spacing:-0.3px;">910</div>
<div style="position:absolute;left:441px;top:232px;width:1px;height:5px;background:#000"></div>
<div class="t" style="left:292px;width:300px;text-align:center;top:239px;font-size:12px;letter-spacing:-0.3px;">920</div>
<div style="position:absolute;left:473px;top:232px;width:1px;height:5px;background:#000"></div>
<div class="t" style="left:324px;width:300px;text-align:center;top:239px;font-size:12px;letter-spacing:-0.3px;">930</div>
<div style="position:absolute;left:505px;top:232px;width:1px;height:5px;background:#000"></div>
<div class="t" style="left:356px;width:300px;text-align:center;top:239px;font-size:12px;letter-spacing:-0.3px;">940</div>
<div style="position:absolute;left:537px;top:232px;width:1px;height:5px;background:#000"></div>
<div class="t" style="left:388px;width:300px;text-align:center;top:239px;font-size:12px;letter-spacing:-0.3px;">950</div>
<div style="position:absolute;left:570px;top:232px;width:1px;height:5px;background:#000"></div>
<div class="t" style="left:421px;width:300px;text-align:center;top:239px;font-size:12px;letter-spacing:-0.3px;">960</div>
<div style="position:absolute;left:602px;top:232px;width:1px;height:5px;background:#000"></div>
<div class="t" style="left:453px;width:300px;text-align:center;top:239px;font-size:12px;letter-spacing:-0.3px;">970</div>
<div style="position:absolute;left:634px;top:232px;width:1px;height:5px;background:#000"></div>
<div class="t" style="left:485px;width:300px;text-align:center;top:239px;font-size:12px;letter-spacing:-0.3px;">980</div>
<div style="position:absolute;left:666px;top:232px;width:1px;height:5px;background:#000"></div>
<div class="t" style="left:517px;width:300px;text-align:center;top:239px;font-size:12px;letter-spacing:-0.3px;">990</div>
<div style="position:absolute;left:699px;top:232px;width:1px;height:5px;background:#000"></div>
<div class="t" style="left:550px;width:300px;text-align:center;top:239px;font-size:12px;letter-spacing:-0.3px;">1000</div>
<div style="position:absolute;left:731px;top:232px;width:1px;height:5px;background:#000"></div>
<div class="t" style="left:582px;width:300px;text-align:center;top:239px;font-size:12px;letter-spacing:-0.3px;">1010</div>
<div class="t" style="left:403px;width:300px;text-align:center;top:256px;font-size:12px;letter-spacing:-0.3px;">Samples</div>
<div class="t" style="left:280px;top:117px;width:120px;text-align:center;font-size:12px;transform-origin:60px 6px;transform:translate(-5px,6px) rotate(-90deg)">Well depth (V)</div>
<div class="t" style="left:310px;top:304px;font-size:12px;letter-spacing:0.3px;">dV/dt</div>
<div style="position:absolute;left:300px;top:320px;width:456px;height:264px;background:#c0c0c0;overflow:hidden"><div style="position:absolute;left:0;top:0;width:1px;height:264px;background:#adadad"></div><div style="position:absolute;left:1px;top:0;width:442px;height:2px;background:#d8d8d8"></div><div style="position:absolute;left:1px;top:1px;width:11px;height:260px;background:linear-gradient(to right,#d5d5d5 0,#d3d3d3 70%,#c6c6c6 100%)"></div><div style="position:absolute;left:443px;top:0;width:12px;height:264px;background:linear-gradient(to right,#c0c0c0 0,#a8a8a8 50%,#7a7a7a 100%)"></div><div style="position:absolute;left:455px;top:0;width:1px;height:264px;background:#4e4e4e"></div><div style="position:absolute;left:3px;top:262px;width:452px;height:1px;background:#a2a2a2"></div><div style="position:absolute;left:3px;top:263px;width:452px;height:1px;background:#8a8a8a"></div></div>
<div style="position:absolute;left:656px;top:295px;width:100px;height:22px;background:#c4c4c4;overflow:hidden"><div style="position:absolute;left:0;top:0;width:1px;height:22px;background:#b0b0b0"></div><div style="position:absolute;left:1px;top:0;width:86px;height:2px;background:#d6d6d6"></div><div style="position:absolute;left:1px;top:1px;width:11px;height:19px;background:linear-gradient(to right,#d6d6d6,#d2d2d2 70%,#c6c6c6)"></div><div style="position:absolute;left:86px;top:0;width:13px;height:22px;background:linear-gradient(to right,#c4c4c4,#a8a8a8 50%,#7c7c7c)"></div><div style="position:absolute;left:99px;top:0;width:1px;height:22px;background:#555"></div><div style="position:absolute;left:3px;top:20px;width:96px;height:1px;background:#a6a6a6"></div><div style="position:absolute;left:3px;top:21px;width:96px;height:1px;background:#8a8a8a"></div></div>
<div class="t" style="left:672px;top:300px;font-size:12px;">Plot 0</div>
<svg style="position:absolute;left:713px;top:297px" width="29" height="18" viewBox="0 0 29 18">
<rect x="0" y="0" width="29" height="18" fill="#000"/>
<path d="M0.5 18V0.5H29" stroke="#444" fill="none" shape-rendering="crispEdges"/>
<path d="M28.5 0V17.5H0" stroke="#e2e2e2" fill="none" shape-rendering="crispEdges"/>
<polyline points="2.5,12.5 10.5,2.5 18.5,12.5 26.5,3.5" fill="none" stroke="#fff" stroke-width="1" shape-rendering="crispEdges"/>
<path fill="#fff" shape-rendering="crispEdges" d="M8 0h1v1h-1zM8 4h1v1h-1zM9 1h1v1h-1zM9 3h1v1h-1zM10 2h1v1h-1zM11 3h1v1h-1zM11 1h1v1h-1zM12 4h1v1h-1zM12 0h1v1h-1zM16 10h1v1h-1zM16 14h1v1h-1zM17 11h1v1h-1zM17 13h1v1h-1zM18 12h1v1h-1zM19 13h1v1h-1zM19 11h1v1h-1zM20 14h1v1h-1zM20 10h1v1h-1zM3 13h1v1h-1zM4 14h1v1h-1zM25 2h1v1h-1zM24 1h1v1h-1z"/>
</svg>
<svg style="position:absolute;left:383px;top:329px" width="350" height="214" viewBox="0 0 350 214"><rect x="0" y="0" width="350" height="214" fill="#000"/><path d="M7.5 1V213M14.5 1V213M20.5 1V213M26.5 1V213M39.5 1V213M45.5 1V213M51.5 1V213M58.5 1V213M70.5 1V213M77.5 1V213M83.5 1V213M89.5 1V213M102.5 1V213M108.5 1V213M115.5 1V213M121.5 1V213M133.5 1V213M140.5 1V213M146.5 1V213M152.5 1V213M165.5 1V213M171.5 1V213M178.5 1V213M184.5 1V213M197.5 1V213M203.5 1V213M209.5 1V213M216.5 1V213M228.5 1V213M234.5 1V213M241.5 1V213M247.5 1V213M260.5 1V213M266.5 1V213M272.5 1V213M279.5 1V213M291.5 1V213M298.5 1V213M304.5 1V213M310.5 1V213M323.5 1V213M329.5 1V213M335.5 1V213M342.5 1V213M1 11.5H349M1 30.5H349M1 49.5H349M1 68.5H349M1 87.5H349M1 106.5H349M1 126.5H349M1 145.5H349M1 164.5H349M1 183.5H349M1 202.5H349" stroke="#003f00" stroke-width="1" shape-rendering="crispEdges"/><path d="M33.5 1V213M64.5 1V213M96.5 1V213M127.5 1V213M159.5 1V213M190.5 1V213M222.5 1V213M253.5 1V213M285.5 1V213M316.5 1V213M1 20.5H349M1 39.5H349M1 59.5H349M1 78.5H349M1 97.5H349M1 116.5H349M1 135.5H349M1 154.5H349M1 174.5H349M1 193.5H349" stroke="#007000" stroke-width="1" shape-rendering="crispEdges"/><path d="M0.5 214V0.5H350" stroke="#7c7c7c" fill="none" shape-rendering="crispEdges"/><path d="M349.5 0V213.5H0" stroke="#e6e6e6" fill="none" shape-rendering="crispEdges"/><clipPath id="c383329"><rect x="1" y="1" width="348" height="212"/></clipPath><g clip-path="url(#c383329)"><polyline points="1.5,169.5 4.5,169.5 7.5,169.5 10.5,168.5 14.5,167.5 17.5,166.5 20.5,164.5 23.5,163.5 26.5,163.5 29.5,163.5 33.5,163.5 36.5,163.5 39.5,161.5 42.5,160.5 45.5,160.5 48.5,161.5 51.5,183.5 55.5,185.5 58.5,209.5 61.5,210.5 64.5,189.5 67.5,181.5 70.5,161.5 74.5,150.5 77.5,143.5 80.5,144.5 83.5,145.5 86.5,144.5 89.5,144.5 92.5,143.5 96.5,157.5 99.5,156.5 102.5,140.5 105.5,138.5 108.5,135.5 111.5,132.5 115.5,131.5 118.5,131.5 121.5,131.5 124.5,131.5 127.5,131.5 130.5,130.5 134.5,118.5 137.5,118.5 140.5,118.5 143.5,118.5 146.5,120.5 149.5,121.5 152.5,165.5 156.5,165.5 159.5,165.5 162.5,116.5 165.5,110.5 168.5,110.5 171.5,111.5 175.5,110.5 178.5,110.5 181.5,109.5 184.5,108.5 187.5,107.5 190.5,96.5 193.5,94.5 197.5,95.5 200.5,95.5 203.5,89.5 206.5,121.5 209.5,137.5 212.5,121.5 216.5,110.5 219.5,121.5 222.5,110.5 225.5,77.5 228.5,90.5 231.5,90.5 234.5,78.5 238.5,78.5 241.5,77.5 244.5,77.5 247.5,77.5 250.5,68.5 253.5,68.5 257.5,68.5 260.5,62.5 263.5,62.5 266.5,62.5 269.5,56.5 272.5,63.5 275.5,64.5 279.5,64.5 282.5,84.5 285.5,103.5 288.5,85.5 291.5,79.5 294.5,110.5 298.5,172.5 301.5,79.5 304.5,85.5 307.5,116.5 310.5,84.5 313.5,64.5 316.5,64.5 320.5,12.5" fill="none" stroke="#fff" stroke-width="1" shape-rendering="crispEdges"/><path fill="#fff" shape-rendering="crispEdges" d="M-1 167h1v1h-1zM-1 171h1v1h-1zM0 168h1v1h-1zM0 170h1v1h-1zM1 169h1v1h-1zM2 170h1v1h-1zM2 168h1v1h-1zM3 171h1v1h-1zM3 167h1v1h-1zM2 167h1v1h-1zM2 171h1v1h-1zM3 168h1v1h-1zM3 170h1v1h-1zM4 169h1v1h-1zM5 170h1v1h-1zM5 168h1v1h-1zM6 171h1v1h-1zM6 167h1v1h-1zM5 167h1v1h-1zM5 171h1v1h-1zM6 168h1v1h-1zM6 170h1v1h-1zM7 169h1v1h-1zM8 170h1v1h-1zM8 168h1v1h-1zM9 171h1v1h-1zM9 167h1v1h-1zM8 166h1v1h-1zM8 170h1v1h-1zM9 167h1v1h-1zM9 169h1v1h-1zM10 168h1v1h-1zM11 169h1v1h-1zM11 167h1v1h-1zM12 170h1v1h-1zM12 166h1v1h-1zM12 165h1v1h-1zM12 169h1v1h-1zM13 166h1v1h-1zM13 168h1v1h-1zM14 167h1v1h-1zM15 168h1v1h-1zM15 166h1v1h-1zM16 169h1v1h-1zM16 165h1v1h-1zM15 164h1v1h-1zM15 168h1v1h-1zM16 165h1v1h-1zM16 167h1v1h-1zM17 166h1v1h-1zM18 167h1v1h-1zM18 165h1v1h-1zM19 168h1v1h-1zM19 164h1v1h-1zM18 162h1v1h-1zM18 166h1v1h-1zM19 163h1v1h-1zM19 165h1v1h-1zM20 164h1v1h-1zM21 165h1v1h-1zM21 163h1v1h-1zM22 166h1v1h-1zM22 162h1v1h-1zM21 161h1v1h-1zM21 165h1v1h-1zM22 162h1v1h-1zM22 164h1v1h-1zM23 163h1v1h-1zM24 164h1v1h-1zM24 162h1v1h-1zM25 165h1v1h-1zM25 161h1v1h-1zM24 161h1v1h-1zM24 165h1v1h-1zM25 162h1v1h-1zM25 164h1v1h-1zM26 163h1v1h-1zM27 164h1v1h-1zM27 162h1v1h-1zM28 165h1v1h-1zM28 161h1v1h-1zM27 161h1v1h-1zM27 165h1v1h-1zM28 162h1v1h-1zM28 164h1v1h-1zM29 163h1v1h-1zM30 164h1v1h-1zM30 162h1v1h-1zM31 165h1v1h-1zM31 161h1v1h-1zM31 161h1v1h-1zM31 165h1v1h-1zM32 162h1v1h-1zM32 164h1v1h-1zM33 163h1v1h-1zM34 164h1v1h-1zM34 162h1v1h-1zM35 165h1v1h-1zM35 161h1v1h-1zM34 161h1v1h-1zM34 165h1v1h-1zM35 162h1v1h-1zM35 164h1v1h-1zM36 163h1v1h-1zM37 164h1v1h-1zM37 162h1v1h-1zM38 165h1v1h-1zM38 161h1v1h-1zM37 159h1v1h-1zM37 163h1v1h-1zM38 160h1v1h-1zM38 162h1v1h-1zM39 161h1v1h-1zM40 162h1v1h-1zM40 160h1v1h-1zM41 163h1v1h-1zM41 159h1v1h-1zM40 158h1v1h-1zM40 162h1v1h-1zM41 159h1v1h-1zM41 161h1v1h-1zM42 160h1v1h-1zM43 161h1v1h-1zM43 159h1v1h-1zM44 162h1v1h-1zM44 158h1v1h-1zM43 158h1v1h-1zM43 162h1v1h-1zM44 159h1v1h-1zM44 161h1v1h-1zM45 160h1v1h-1zM46 161h1v1h-1zM46 159h1v1h-1zM47 162h1v1h-1zM47 158h1v1h-1zM46 159h1v1h-1zM46 163h1v1h-1zM47 160h1v1h-1zM47 162h1v1h-1zM48 161h1v1h-1zM49 162h1v1h-1zM49 160h1v1h-1zM50 163h1v1h-1zM50 159h1v1h-1zM49 181h1v1h-1zM49 185h1v1h-1zM50 182h1v1h-1zM50 184h1v1h-1zM51 183h1v1h-1zM52 184h1v1h-1zM52 182h1v1h-1zM53 185h1v1h-1zM53 181h1v1h-1zM53 183h1v1h-1zM53 187h1v1h-1zM54 184h1v1h-1zM54 186h1v1h-1zM55 185h1v1h-1zM56 186h1v1h-1zM56 184h1v1h-1zM57 187h1v1h-1zM57 183h1v1h-1zM56 207h1v1h-1zM56 211h1v1h-1zM57 208h1v1h-1zM57 210h1v1h-1zM58 209h1v1h-1zM59 210h1v1h-1zM59 208h1v1h-1zM60 211h1v1h-1zM60 207h1v1h-1zM59 208h1v1h-1zM59 212h1v1h-1zM60 209h1v1h-1zM60 211h1v1h-1zM61 210h1v1h-1zM62 211h1v1h-1zM62 209h1v1h-1zM63 212h1v1h-1zM63 208h1v1h-1zM62 187h1v1h-1zM62 191h1v1h-1zM63 188h1v1h-1zM63 190h1v1h-1zM64 189h1v1h-1zM65 190h1v1h-1zM65 188h1v1h-1zM66 191h1v1h-1zM66 187h1v1h-1zM65 179h1v1h-1zM65 183h1v1h-1zM66 180h1v1h-1zM66 182h1v1h-1zM67 181h1v1h-1zM68 182h1v1h-1zM68 180h1v1h-1zM69 183h1v1h-1zM69 179h1v1h-1zM68 159h1v1h-1zM68 163h1v1h-1zM69 160h1v1h-1zM69 162h1v1h-1zM70 161h1v1h-1zM71 162h1v1h-1zM71 160h1v1h-1zM72 163h1v1h-1zM72 159h1v1h-1zM72 148h1v1h-1zM72 152h1v1h-1zM73 149h1v1h-1zM73 151h1v1h-1zM74 150h1v1h-1zM75 151h1v1h-1zM75 149h1v1h-1zM76 152h1v1h-1zM76 148h1v1h-1zM75 141h1v1h-1zM75 145h1v1h-1zM76 142h1v1h-1zM76 144h1v1h-1zM77 143h1v1h-1zM78 144h1v1h-1zM78 142h1v1h-1zM79 145h1v1h-1zM79 141h1v1h-1zM78 142h1v1h-1zM78 146h1v1h-1zM79 143h1v1h-1zM79 145h1v1h-1zM80 144h1v1h-1zM81 145h1v1h-1zM81 143h1v1h-1zM82 146h1v1h-1zM82 142h1v1h-1zM81 143h1v1h-1zM81 147h1v1h-1zM82 144h1v1h-1zM82 146h1v1h-1zM83 145h1v1h-1zM84 146h1v1h-1zM84 144h1v1h-1zM85 147h1v1h-1zM85 143h1v1h-1zM84 142h1v1h-1zM84 146h1v1h-1zM85 143h1v1h-1zM85 145h1v1h-1zM86 144h1v1h-1zM87 145h1v1h-1zM87 143h1v1h-1zM88 146h1v1h-1zM88 142h1v1h-1zM87 142h1v1h-1zM87 146h1v1h-1zM88 143h1v1h-1zM88 145h1v1h-1zM89 144h1v1h-1zM90 145h1v1h-1zM90 143h1v1h-1zM91 146h1v1h-1zM91 142h1v1h-1zM90 141h1v1h-1zM90 145h1v1h-1zM91 142h1v1h-1zM91 144h1v1h-1zM92 143h1v1h-1zM93 144h1v1h-1zM93 142h1v1h-1zM94 145h1v1h-1zM94 141h1v1h-1zM94 155h1v1h-1zM94 159h1v1h-1zM95 156h1v1h-1zM95 158h1v1h-1zM96 157h1v1h-1zM97 158h1v1h-1zM97 156h1v1h-1zM98 159h1v1h-1zM98 155h1v1h-1zM97 154h1v1h-1zM97 158h1v1h-1zM98 155h1v1h-1zM98 157h1v1h-1zM99 156h1v1h-1zM100 157h1v1h-1zM100 155h1v1h-1zM101 158h1v1h-1zM101 154h1v1h-1zM100 138h1v1h-1zM100 142h1v1h-1zM101 139h1v1h-1zM101 141h1v1h-1zM102 140h1v1h-1zM103 141h1v1h-1zM103 139h1v1h-1zM104 142h1v1h-1zM104 138h1v1h-1zM103 136h1v1h-1zM103 140h1v1h-1zM104 137h1v1h-1zM104 139h1v1h-1zM105 138h1v1h-1zM106 139h1v1h-1zM106 137h1v1h-1zM107 140h1v1h-1zM107 136h1v1h-1zM106 133h1v1h-1zM106 137h1v1h-1zM107 134h1v1h-1zM107 136h1v1h-1zM108 135h1v1h-1zM109 136h1v1h-1zM109 134h1v1h-1zM110 137h1v1h-1zM110 133h1v1h-1zM109 130h1v1h-1zM109 134h1v1h-1zM110 131h1v1h-1zM110 133h1v1h-1zM111 132h1v1h-1zM112 133h1v1h-1zM112 131h1v1h-1zM113 134h1v1h-1zM113 130h1v1h-1zM113 129h1v1h-1zM113 133h1v1h-1zM114 130h1v1h-1zM114 132h1v1h-1zM115 131h1v1h-1zM116 132h1v1h-1zM116 130h1v1h-1zM117 133h1v1h-1zM117 129h1v1h-1zM116 129h1v1h-1zM116 133h1v1h-1zM117 130h1v1h-1zM117 132h1v1h-1zM118 131h1v1h-1zM119 132h1v1h-1zM119 130h1v1h-1zM120 133h1v1h-1zM120 129h1v1h-1zM119 129h1v1h-1zM119 133h1v1h-1zM120 130h1v1h-1zM120 132h1v1h-1zM121 131h1v1h-1zM122 132h1v1h-1zM122 130h1v1h-1zM123 133h1v1h-1zM123 129h1v1h-1zM122 129h1v1h-1zM122 133h1v1h-1zM123 130h1v1h-1zM123 132h1v1h-1zM124 131h1v1h-1zM125 132h1v1h-1zM125 130h1v1h-1zM126 133h1v1h-1zM126 129h1v1h-1zM125 129h1v1h-1zM125 133h1v1h-1zM126 130h1v1h-1zM126 132h1v1h-1zM127 131h1v1h-1zM128 132h1v1h-1zM128 130h1v1h-1zM129 133h1v1h-1zM129 129h1v1h-1zM128 128h1v1h-1zM128 132h1v1h-1zM129 129h1v1h-1zM129 131h1v1h-1zM130 130h1v1h-1zM131 131h1v1h-1zM131 129h1v1h-1zM132 132h1v1h-1zM132 128h1v1h-1zM132 116h1v1h-1zM132 120h1v1h-1zM133 117h1v1h-1zM133 119h1v1h-1zM134 118h1v1h-1zM135 119h1v1h-1zM135 117h1v1h-1zM136 120h1v1h-1zM136 116h1v1h-1zM135 116h1v1h-1zM135 120h1v1h-1zM136 117h1v1h-1zM136 119h1v1h-1zM137 118h1v1h-1zM138 119h1v1h-1zM138 117h1v1h-1zM139 120h1v1h-1zM139 116h1v1h-1zM138 116h1v1h-1zM138 120h1v1h-1zM139 117h1v1h-1zM139 119h1v1h-1zM140 118h1v1h-1zM141 119h1v1h-1zM141 117h1v1h-1zM142 120h1v1h-1zM142 116h1v1h-1zM141 116h1v1h-1zM141 120h1v1h-1zM142 117h1v1h-1zM142 119h1v1h-1zM143 118h1v1h-1zM144 119h1v1h-1zM144 117h1v1h-1zM145 120h1v1h-1zM145 116h1v1h-1zM144 118h1v1h-1zM144 122h1v1h-1zM145 119h1v1h-1zM145 121h1v1h-1zM146 120h1v1h-1zM147 121h1v1h-1zM147 119h1v1h-1zM148 122h1v1h-1zM148 118h1v1h-1zM147 119h1v1h-1zM147 123h1v1h-1zM148 120h1v1h-1zM148 122h1v1h-1zM149 121h1v1h-1zM150 122h1v1h-1zM150 120h1v1h-1zM151 123h1v1h-1zM151 119h1v1h-1zM150 163h1v1h-1zM150 167h1v1h-1zM151 164h1v1h-1zM151 166h1v1h-1zM152 165h1v1h-1zM153 166h1v1h-1zM153 164h1v1h-1zM154 167h1v1h-1zM154 163h1v1h-1zM154 163h1v1h-1zM154 167h1v1h-1zM155 164h1v1h-1zM155 166h1v1h-1zM156 165h1v1h-1zM157 166h1v1h-1zM157 164h1v1h-1zM158 167h1v1h-1zM158 163h1v1h-1zM157 163h1v1h-1zM157 167h1v1h-1zM158 164h1v1h-1zM158 166h1v1h-1zM159 165h1v1h-1zM160 166h1v1h-1zM160 164h1v1h-1zM161 167h1v1h-1zM161 163h1v1h-1zM160 114h1v1h-1zM160 118h1v1h-1zM161 115h1v1h-1zM161 117h1v1h-1zM162 116h1v1h-1zM163 117h1v1h-1zM163 115h1v1h-1zM164 118h1v1h-1zM164 114h1v1h-1zM163 108h1v1h-1zM163 112h1v1h-1zM164 109h1v1h-1zM164 111h1v1h-1zM165 110h1v1h-1zM166 111h1v1h-1zM166 109h1v1h-1zM167 112h1v1h-1zM167 108h1v1h-1zM166 108h1v1h-1zM166 112h1v1h-1zM167 109h1v1h-1zM167 111h1v1h-1zM168 110h1v1h-1zM169 111h1v1h-1zM169 109h1v1h-1zM170 112h1v1h-1zM170 108h1v1h-1zM169 109h1v1h-1zM169 113h1v1h-1zM170 110h1v1h-1zM170 112h1v1h-1zM171 111h1v1h-1zM172 112h1v1h-1zM172 110h1v1h-1zM173 113h1v1h-1zM173 109h1v1h-1zM173 108h1v1h-1zM173 112h1v1h-1zM174 109h1v1h-1zM174 111h1v1h-1zM175 110h1v1h-1zM176 111h1v1h-1zM176 109h1v1h-1zM177 112h1v1h-1zM177 108h1v1h-1zM176 108h1v1h-1zM176 112h1v1h-1zM177 109h1v1h-1zM177 111h1v1h-1zM178 110h1v1h-1zM179 111h1v1h-1zM179 109h1v1h-1zM180 112h1v1h-1zM180 108h1v1h-1zM179 107h1v1h-1zM179 111h1v1h-1zM180 108h1v1h-1zM180 110h1v1h-1zM181 109h1v1h-1zM182 110h1v1h-1zM182 108h1v1h-1zM183 111h1v1h-1zM183 107h1v1h-1zM182 106h1v1h-1zM182 110h1v1h-1zM183 107h1v1h-1zM183 109h1v1h-1zM184 108h1v1h-1zM185 109h1v1h-1zM185 107h1v1h-1zM186 110h1v1h-1zM186 106h1v1h-1zM185 105h1v1h-1zM185 109h1v1h-1zM186 106h1v1h-1zM186 108h1v1h-1zM187 107h1v1h-1zM188 108h1v1h-1zM188 106h1v1h-1zM189 109h1v1h-1zM189 105h1v1h-1zM188 94h1v1h-1zM188 98h1v1h-1zM189 95h1v1h-1zM189 97h1v1h-1zM190 96h1v1h-1zM191 97h1v1h-1zM191 95h1v1h-1zM192 98h1v1h-1zM192 94h1v1h-1zM191 92h1v1h-1zM191 96h1v1h-1zM192 93h1v1h-1zM192 95h1v1h-1zM193 94h1v1h-1zM194 95h1v1h-1zM194 93h1v1h-1zM195 96h1v1h-1zM195 92h1v1h-1zM195 93h1v1h-1zM195 97h1v1h-1zM196 94h1v1h-1zM196 96h1v1h-1zM197 95h1v1h-1zM198 96h1v1h-1zM198 94h1v1h-1zM199 97h1v1h-1zM199 93h1v1h-1zM198 93h1v1h-1zM198 97h1v1h-1zM199 94h1v1h-1zM199 96h1v1h-1zM200 95h1v1h-1zM201 96h1v1h-1zM201 94h1v1h-1zM202 97h1v1h-1zM202 93h1v1h-1zM201 87h1v1h-1zM201 91h1v1h-1zM202 88h1v1h-1zM202 90h1v1h-1zM203 89h1v1h-1zM204 90h1v1h-1zM204 88h1v1h-1zM205 91h1v1h-1zM205 87h1v1h-1zM204 119h1v1h-1zM204 123h1v1h-1zM205 120h1v1h-1zM205 122h1v1h-1zM206 121h1v1h-1zM207 122h1v1h-1zM207 120h1v1h-1zM208 123h1v1h-1zM208 119h1v1h-1zM207 135h1v1h-1zM207 139h1v1h-1zM208 136h1v1h-1zM208 138h1v1h-1zM209 137h1v1h-1zM210 138h1v1h-1zM210 136h1v1h-1zM211 139h1v1h-1zM211 135h1v1h-1zM210 119h1v1h-1zM210 123h1v1h-1zM211 120h1v1h-1zM211 122h1v1h-1zM212 121h1v1h-1zM213 122h1v1h-1zM213 120h1v1h-1zM214 123h1v1h-1zM214 119h1v1h-1zM214 108h1v1h-1zM214 112h1v1h-1zM215 109h1v1h-1zM215 111h1v1h-1zM216 110h1v1h-1zM217 111h1v1h-1zM217 109h1v1h-1zM218 112h1v1h-1zM218 108h1v1h-1zM217 119h1v1h-1zM217 123h1v1h-1zM218 120h1v1h-1zM218 122h1v1h-1zM219 121h1v1h-1zM220 122h1v1h-1zM220 120h1v1h-1zM221 123h1v1h-1zM221 119h1v1h-1zM220 108h1v1h-1zM220 112h1v1h-1zM221 109h1v1h-1zM221 111h1v1h-1zM222 110h1v1h-1zM223 111h1v1h-1zM223 109h1v1h-1zM224 112h1v1h-1zM224 108h1v1h-1zM223 75h1v1h-1zM223 79h1v1h-1zM224 76h1v1h-1zM224 78h1v1h-1zM225 77h1v1h-1zM226 78h1v1h-1zM226 76h1v1h-1zM227 79h1v1h-1zM227 75h1v1h-1zM226 88h1v1h-1zM226 92h1v1h-1zM227 89h1v1h-1zM227 91h1v1h-1zM228 90h1v1h-1zM229 91h1v1h-1zM229 89h1v1h-1zM230 92h1v1h-1zM230 88h1v1h-1zM229 88h1v1h-1zM229 92h1v1h-1zM230 89h1v1h-1zM230 91h1v1h-1zM231 90h1v1h-1zM232 91h1v1h-1zM232 89h1v1h-1zM233 92h1v1h-1zM233 88h1v1h-1zM232 76h1v1h-1zM232 80h1v1h-1zM233 77h1v1h-1zM233 79h1v1h-1zM234 78h1v1h-1zM235 79h1v1h-1zM235 77h1v1h-1zM236 80h1v1h-1zM236 76h1v1h-1zM236 76h1v1h-1zM236 80h1v1h-1zM237 77h1v1h-1zM237 79h1v1h-1zM238 78h1v1h-1zM239 79h1v1h-1zM239 77h1v1h-1zM240 80h1v1h-1zM240 76h1v1h-1zM239 75h1v1h-1zM239 79h1v1h-1zM240 76h1v1h-1zM240 78h1v1h-1zM241 77h1v1h-1zM242 78h1v1h-1zM242 76h1v1h-1zM243 79h1v1h-1zM243 75h1v1h-1zM242 75h1v1h-1zM242 79h1v1h-1zM243 76h1v1h-1zM243 78h1v1h-1zM244 77h1v1h-1zM245 78h1v1h-1zM245 76h1v1h-1zM246 79h1v1h-1zM246 75h1v1h-1zM245 75h1v1h-1zM245 79h1v1h-1zM246 76h1v1h-1zM246 78h1v1h-1zM247 77h1v1h-1zM248 78h1v1h-1zM248 76h1v1h-1zM249 79h1v1h-1zM249 75h1v1h-1zM248 66h1v1h-1zM248 70h1v1h-1zM249 67h1v1h-1zM249 69h1v1h-1zM250 68h1v1h-1zM251 69h1v1h-1zM251 67h1v1h-1zM252 70h1v1h-1zM252 66h1v1h-1zM251 66h1v1h-1zM251 70h1v1h-1zM252 67h1v1h-1zM252 69h1v1h-1zM253 68h1v1h-1zM254 69h1v1h-1zM254 67h1v1h-1zM255 70h1v1h-1zM255 66h1v1h-1zM255 66h1v1h-1zM255 70h1v1h-1zM256 67h1v1h-1zM256 69h1v1h-1zM257 68h1v1h-1zM258 69h1v1h-1zM258 67h1v1h-1zM259 70h1v1h-1zM259 66h1v1h-1zM258 60h1v1h-1zM258 64h1v1h-1zM259 61h1v1h-1zM259 63h1v1h-1zM260 62h1v1h-1zM261 63h1v1h-1zM261 61h1v1h-1zM262 64h1v1h-1zM262 60h1v1h-1zM261 60h1v1h-1zM261 64h1v1h-1zM262 61h1v1h-1zM262 63h1v1h-1zM263 62h1v1h-1zM264 63h1v1h-1zM264 61h1v1h-1zM265 64h1v1h-1zM265 60h1v1h-1zM264 60h1v1h-1zM264 64h1v1h-1zM265 61h1v1h-1zM265 63h1v1h-1zM266 62h1v1h-1zM267 63h1v1h-1zM267 61h1v1h-1zM268 64h1v1h-1zM268 60h1v1h-1zM267 54h1v1h-1zM267 58h1v1h-1zM268 55h1v1h-1zM268 57h1v1h-1zM269 56h1v1h-1zM270 57h1v1h-1zM270 55h1v1h-1zM271 58h1v1h-1zM271 54h1v1h-1zM270 61h1v1h-1zM270 65h1v1h-1zM271 62h1v1h-1zM271 64h1v1h-1zM272 63h1v1h-1zM273 64h1v1h-1zM273 62h1v1h-1zM274 65h1v1h-1zM274 61h1v1h-1zM273 62h1v1h-1zM273 66h1v1h-1zM274 63h1v1h-1zM274 65h1v1h-1zM275 64h1v1h-1zM276 65h1v1h-1zM276 63h1v1h-1zM277 66h1v1h-1zM277 62h1v1h-1zM277 62h1v1h-1zM277 66h1v1h-1zM278 63h1v1h-1zM278 65h1v1h-1zM279 64h1v1h-1zM280 65h1v1h-1zM280 63h1v1h-1zM281 66h1v1h-1zM281 62h1v1h-1zM280 82h1v1h-1zM280 86h1v1h-1zM281 83h1v1h-1zM281 85h1v1h-1zM282 84h1v1h-1zM283 85h1v1h-1zM283 83h1v1h-1zM284 86h1v1h-1zM284 82h1v1h-1zM283 101h1v1h-1zM283 105h1v1h-1zM284 102h1v1h-1zM284 104h1v1h-1zM285 103h1v1h-1zM286 104h1v1h-1zM286 102h1v1h-1zM287 105h1v1h-1zM287 101h1v1h-1zM286 83h1v1h-1zM286 87h1v1h-1zM287 84h1v1h-1zM287 86h1v1h-1zM288 85h1v1h-1zM289 86h1v1h-1zM289 84h1v1h-1zM290 87h1v1h-1zM290 83h1v1h-1zM289 77h1v1h-1zM289 81h1v1h-1zM290 78h1v1h-1zM290 80h1v1h-1zM291 79h1v1h-1zM292 80h1v1h-1zM292 78h1v1h-1zM293 81h1v1h-1zM293 77h1v1h-1zM292 108h1v1h-1zM292 112h1v1h-1zM293 109h1v1h-1zM293 111h1v1h-1zM294 110h1v1h-1zM295 111h1v1h-1zM295 109h1v1h-1zM296 112h1v1h-1zM296 108h1v1h-1zM296 170h1v1h-1zM296 174h1v1h-1zM297 171h1v1h-1zM297 173h1v1h-1zM298 172h1v1h-1zM299 173h1v1h-1zM299 171h1v1h-1zM300 174h1v1h-1zM300 170h1v1h-1zM299 77h1v1h-1zM299 81h1v1h-1zM300 78h1v1h-1zM300 80h1v1h-1zM301 79h1v1h-1zM302 80h1v1h-1zM302 78h1v1h-1zM303 81h1v1h-1zM303 77h1v1h-1zM302 83h1v1h-1zM302 87h1v1h-1zM303 84h1v1h-1zM303 86h1v1h-1zM304 85h1v1h-1zM305 86h1v1h-1zM305 84h1v1h-1zM306 87h1v1h-1zM306 83h1v1h-1zM305 114h1v1h-1zM305 118h1v1h-1zM306 115h1v1h-1zM306 117h1v1h-1zM307 116h1v1h-1zM308 117h1v1h-1zM308 115h1v1h-1zM309 118h1v1h-1zM309 114h1v1h-1zM308 82h1v1h-1zM308 86h1v1h-1zM309 83h1v1h-1zM309 85h1v1h-1zM310 84h1v1h-1zM311 85h1v1h-1zM311 83h1v1h-1zM312 86h1v1h-1zM312 82h1v1h-1zM311 62h1v1h-1zM311 66h1v1h-1zM312 63h1v1h-1zM312 65h1v1h-1zM313 64h1v1h-1zM314 65h1v1h-1zM314 63h1v1h-1zM315 66h1v1h-1zM315 62h1v1h-1zM314 62h1v1h-1zM314 66h1v1h-1zM315 63h1v1h-1zM315 65h1v1h-1zM316 64h1v1h-1zM317 65h1v1h-1zM317 63h1v1h-1zM318 66h1v1h-1zM318 62h1v1h-1zM318 10h1v1h-1zM318 14h1v1h-1zM319 11h1v1h-1zM319 13h1v1h-1zM320 12h1v1h-1zM321 13h1v1h-1zM321 11h1v1h-1zM322 14h1v1h-1zM322 10h1v1h-1z"/></g></svg>
<div class="t" style="left:75px;width:300px;text-align:right;top:325px;font-size:12px;">-500</div>
<div style="position:absolute;left:377px;top:330px;width:5px;height:1px;background:#000"></div>
<div class="t" style="left:75px;width:300px;text-align:right;top:344px;font-size:12px;">-1000</div>
<div style="position:absolute;left:377px;top:349px;width:5px;height:1px;background:#000"></div>
<div class="t" style="left:75px;width:300px;text-align:right;top:363px;font-size:12px;">-1500</div>
<div style="position:absolute;left:377px;top:368px;width:5px;height:1px;background:#000"></div>
<div class="t" style="left:75px;width:300px;text-align:right;top:383px;font-size:12px;">-2000</div>
<div style="position:absolute;left:377px;top:388px;width:5px;height:1px;background:#000"></div>
<div class="t" style="left:75px;width:300px;text-align:right;top:402px;font-size:12px;">-2500</div>
<div style="position:absolute;left:377px;top:407px;width:5px;height:1px;background:#000"></div>
<div class="t" style="left:75px;width:300px;text-align:right;top:421px;font-size:12px;">-3000</div>
<div style="position:absolute;left:377px;top:426px;width:5px;height:1px;background:#000"></div>
<div class="t" style="left:75px;width:300px;text-align:right;top:440px;font-size:12px;">-3500</div>
<div style="position:absolute;left:377px;top:445px;width:5px;height:1px;background:#000"></div>
<div class="t" style="left:75px;width:300px;text-align:right;top:459px;font-size:12px;">-4000</div>
<div style="position:absolute;left:377px;top:464px;width:5px;height:1px;background:#000"></div>
<div class="t" style="left:75px;width:300px;text-align:right;top:478px;font-size:12px;">-4500</div>
<div style="position:absolute;left:377px;top:483px;width:5px;height:1px;background:#000"></div>
<div class="t" style="left:75px;width:300px;text-align:right;top:498px;font-size:12px;">-5000</div>
<div style="position:absolute;left:377px;top:503px;width:5px;height:1px;background:#000"></div>
<div class="t" style="left:75px;width:300px;text-align:right;top:517px;font-size:12px;">-5500</div>
<div style="position:absolute;left:377px;top:522px;width:5px;height:1px;background:#000"></div>
<div class="t" style="left:75px;width:300px;text-align:right;top:536px;font-size:12px;">-6000</div>
<div style="position:absolute;left:377px;top:541px;width:5px;height:1px;background:#000"></div>
<div style="position:absolute;left:384px;top:544px;width:1px;height:5px;background:#000"></div>
<div class="t" style="left:235px;width:300px;text-align:center;top:551px;font-size:12px;letter-spacing:-0.3px;">900</div>
<div style="position:absolute;left:416px;top:544px;width:1px;height:5px;background:#000"></div>
<div class="t" style="left:267px;width:300px;text-align:center;top:551px;font-size:12px;letter-spacing:-0.3px;">910</div>
<div style="position:absolute;left:447px;top:544px;width:1px;height:5px;background:#000"></div>
<div class="t" style="left:298px;width:300px;text-align:center;top:551px;font-size:12px;letter-spacing:-0.3px;">920</div>
<div style="position:absolute;left:479px;top:544px;width:1px;height:5px;background:#000"></div>
<div class="t" style="left:330px;width:300px;text-align:center;top:551px;font-size:12px;letter-spacing:-0.3px;">930</div>
<div style="position:absolute;left:510px;top:544px;width:1px;height:5px;background:#000"></div>
<div class="t" style="left:361px;width:300px;text-align:center;top:551px;font-size:12px;letter-spacing:-0.3px;">940</div>
<div style="position:absolute;left:542px;top:544px;width:1px;height:5px;background:#000"></div>
<div class="t" style="left:393px;width:300px;text-align:center;top:551px;font-size:12px;letter-spacing:-0.3px;">950</div>
<div style="position:absolute;left:573px;top:544px;width:1px;height:5px;background:#000"></div>
<div class="t" style="left:424px;width:300px;text-align:center;top:551px;font-size:12px;letter-spacing:-0.3px;">960</div>
<div style="position:absolute;left:605px;top:544px;width:1px;height:5px;background:#000"></div>
<div class="t" style="left:456px;width:300px;text-align:center;top:551px;font-size:12px;letter-spacing:-0.3px;">970</div>
<div style="position:absolute;left:636px;top:544px;width:1px;height:5px;background:#000"></div>
<div class="t" style="left:487px;width:300px;text-align:center;top:551px;font-size:12px;letter-spacing:-0.3px;">980</div>
<div style="position:absolute;left:668px;top:544px;width:1px;height:5px;background:#000"></div>
<div class="t" style="left:519px;width:300px;text-align:center;top:551px;font-size:12px;letter-spacing:-0.3px;">990</div>
<div style="position:absolute;left:699px;top:544px;width:1px;height:5px;background:#000"></div>
<div class="t" style="left:550px;width:300px;text-align:center;top:551px;font-size:12px;letter-spacing:-0.3px;">1000</div>
<div style="position:absolute;left:731px;top:544px;width:1px;height:5px;background:#000"></div>
<div class="t" style="left:582px;width:300px;text-align:center;top:551px;font-size:12px;letter-spacing:-0.3px;">1010</div>
<div class="t" style="left:407px;width:300px;text-align:center;top:568px;font-size:12px;letter-spacing:-0.3px;">Samples</div>
<div class="t" style="left:280px;top:424px;width:120px;text-align:center;font-size:12px;transform-origin:60px 6px;transform:translate(-5px,6px) rotate(-90deg)">dV/dt (V/s)</div>
</body></html>
